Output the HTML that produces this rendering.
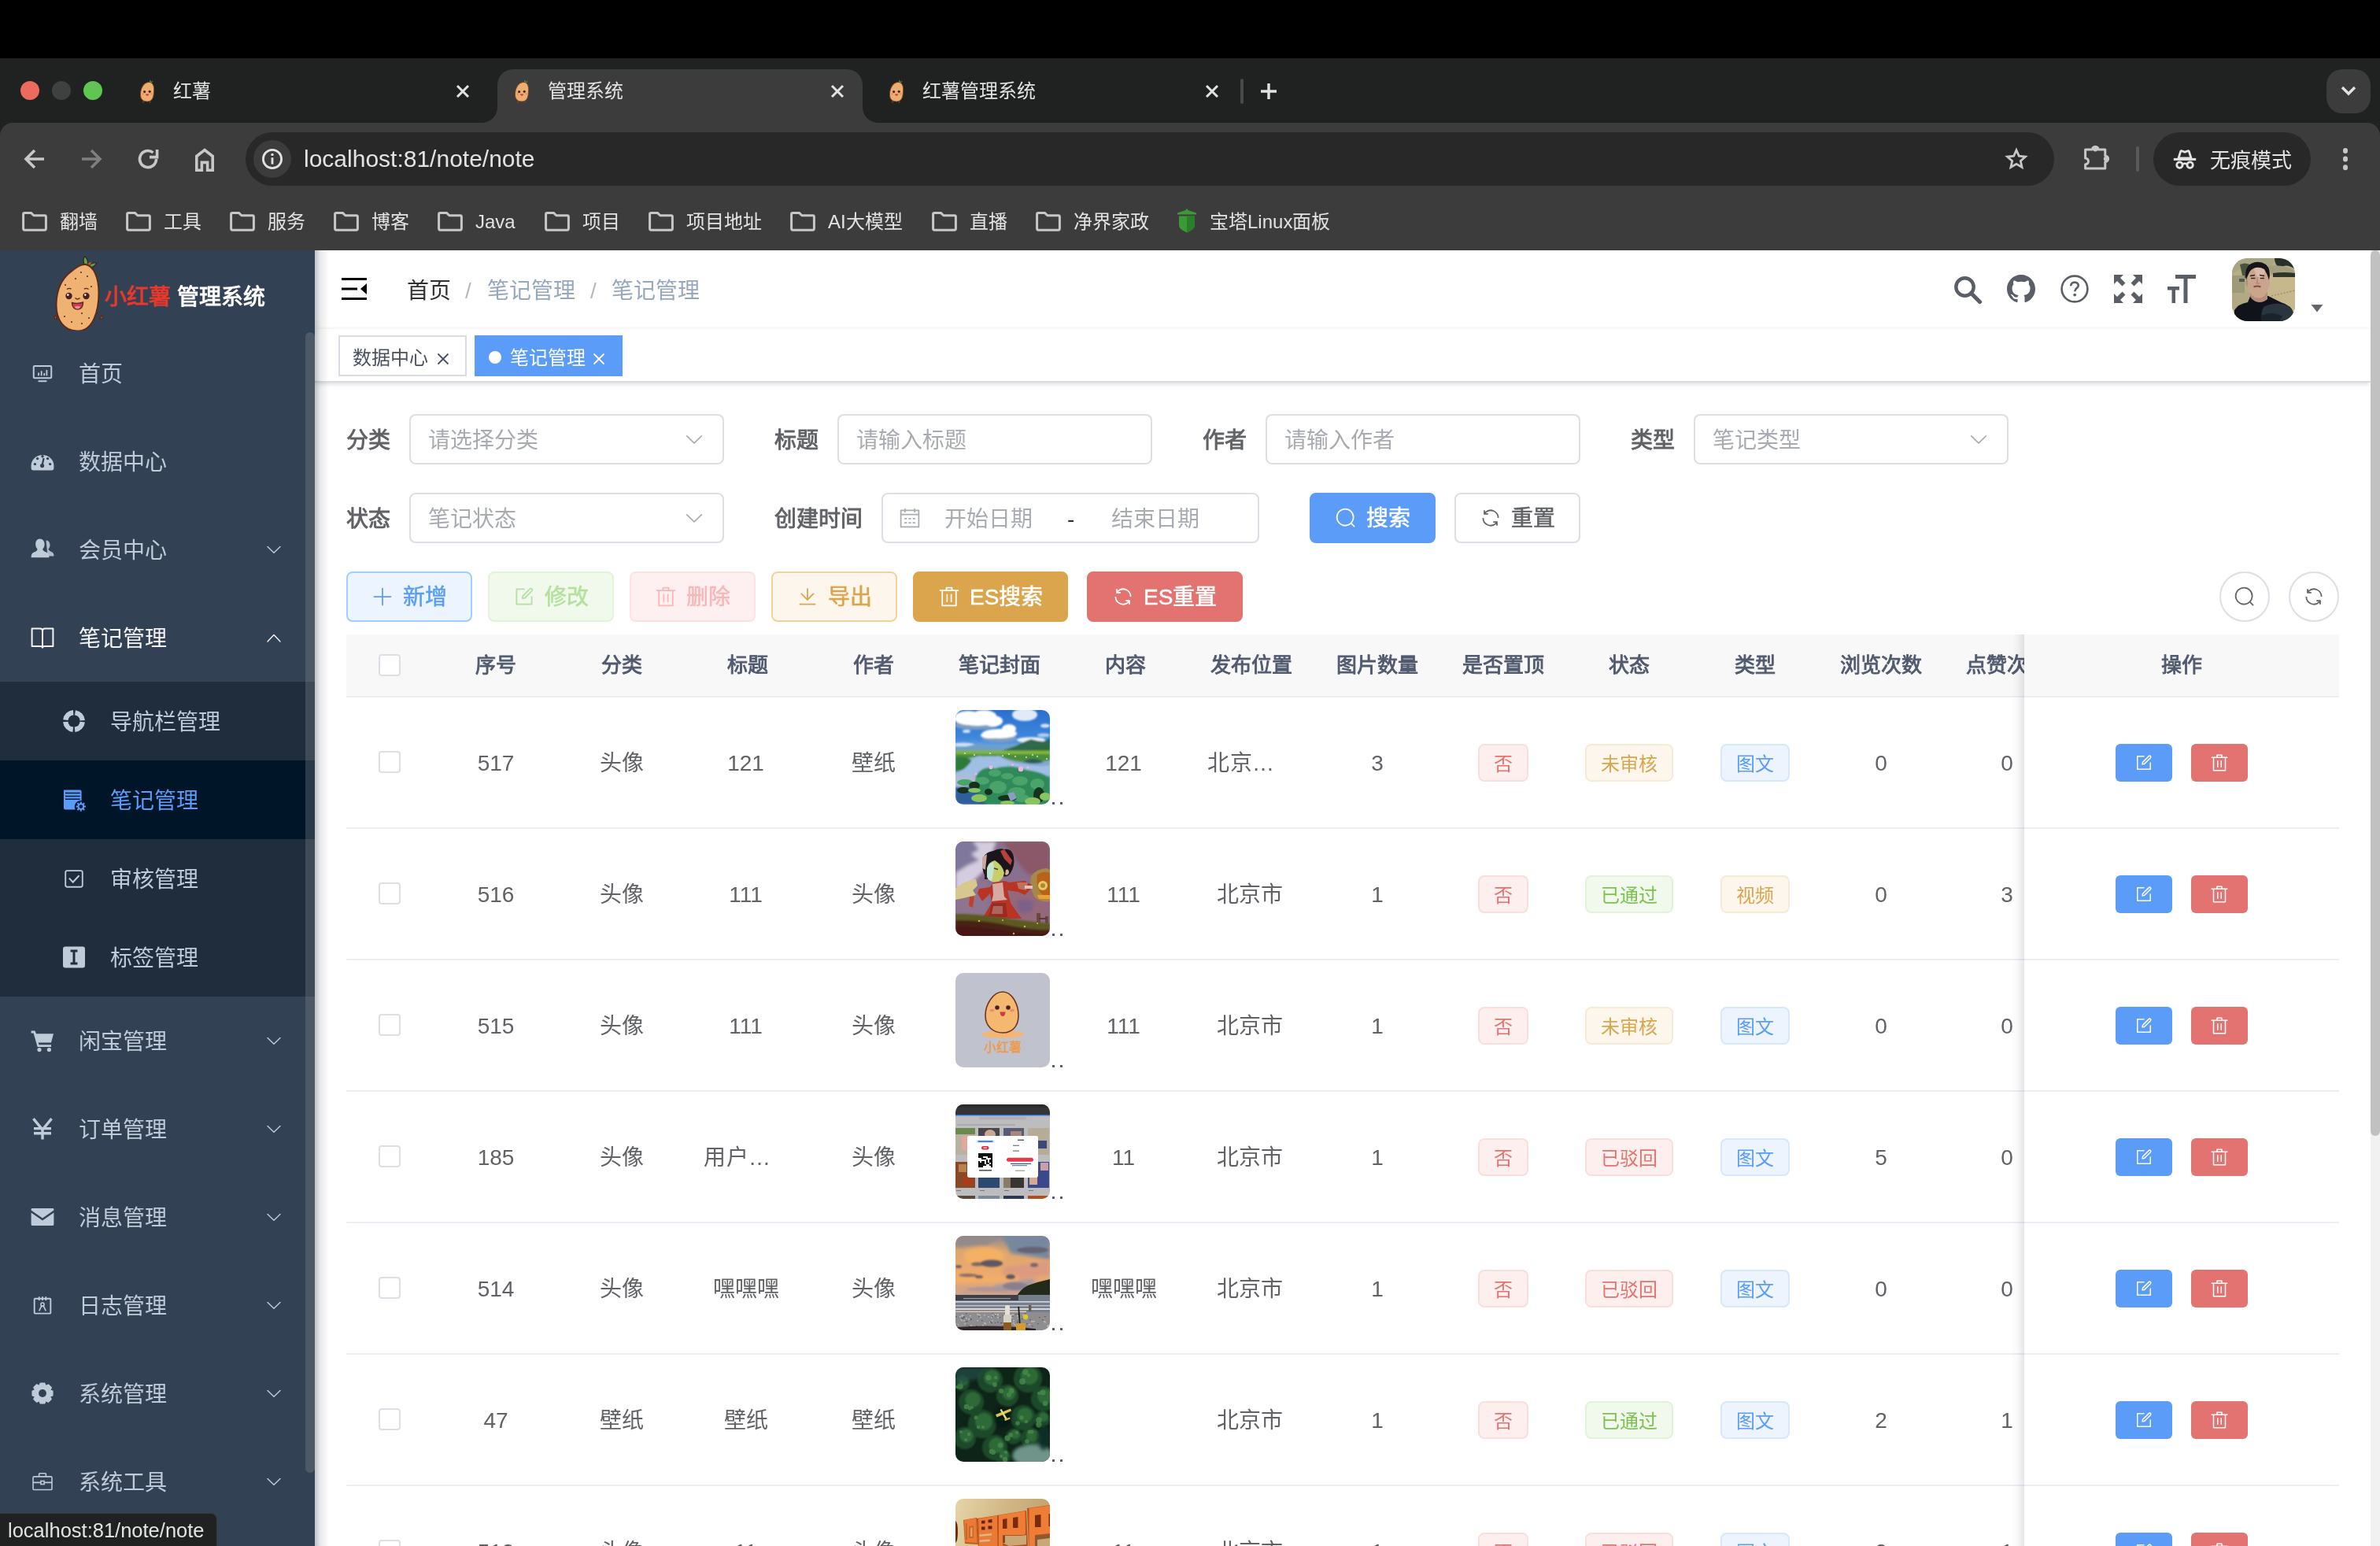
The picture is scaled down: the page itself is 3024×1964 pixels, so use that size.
<!DOCTYPE html>
<html lang="zh-CN">
<head>
<meta charset="utf-8">
<title>管理系统</title>
<style>
*{box-sizing:border-box;margin:0;padding:0}
html,body{width:3024px;height:1964px;overflow:hidden;background:#fff}
body{font-family:"Liberation Sans",sans-serif;position:relative;color:#606266;-webkit-font-smoothing:antialiased}
.abs{position:absolute}
#root{position:absolute;left:0;top:0;width:3024px;height:1964px;overflow:hidden;will-change:transform}
svg{display:block}
/* ---------- browser chrome ---------- */
#menubar{position:absolute;left:0;top:0;width:3024px;height:74px;background:#000}
#tabstrip{position:absolute;left:0;top:74px;width:3024px;height:120px;background:#202121}
#toolbar{position:absolute;left:0;top:156px;width:3024px;height:162px;background:#3c3c3c;border-radius:16px 16px 0 0}
.tl{position:absolute;top:103px;width:24px;height:24px;border-radius:50%}
.tabtitle{position:absolute;top:100px;font-size:24px;line-height:32px;color:#e3e3e3;white-space:nowrap}
#acttab{position:absolute;left:632px;top:88px;width:464px;height:68px;background:#3c3c3c;border-radius:20px 20px 0 0}
#acttab:before,#acttab:after{content:"";position:absolute;bottom:0;width:20px;height:20px}
#acttab:before{left:-20px;background:radial-gradient(circle at 0 0,transparent 19.5px,#3c3c3c 20.5px)}
#acttab:after{right:-20px;background:radial-gradient(circle at 100% 0,transparent 19.5px,#3c3c3c 20.5px)}
#omni{position:absolute;left:312px;top:168px;width:2298px;height:68px;border-radius:34px;background:#282828}
#url{position:absolute;left:386px;top:184px;font-size:30px;line-height:36px;color:#e3e3e3;white-space:nowrap}
#incog{position:absolute;left:2736px;top:168px;width:200px;height:68px;border-radius:34px;background:#282828}
.bm{position:absolute;top:265px;font-size:24px;line-height:34px;color:#e3e3e3;white-space:nowrap}
.bmi{position:absolute;top:267px}
/* ---------- app ---------- */
#sidebar{position:absolute;left:0;top:318px;width:400px;height:1646px;background:#334154;overflow:hidden}
.mi{position:absolute;left:0;width:400px;height:112px;color:#bfcbd9;font-size:28px;line-height:112px}
.mi .t{position:absolute;left:100px;top:2px;white-space:nowrap}
.mi .ic{position:absolute;left:38px;top:40px;width:32px;height:32px}
.mi .ar{position:absolute;left:336px;top:44px;width:24px;height:24px}
#sub{position:absolute;left:0;top:548px;width:400px;height:400px;background:#1f2d3d}
.si{position:absolute;left:0;width:400px;height:100px;color:#bfcbd9;font-size:28px;line-height:100px}
.si .t{position:absolute;left:140px;top:2px;white-space:nowrap}
.si .ic{position:absolute;left:78px;top:34px;width:32px;height:32px}
#main{position:absolute;left:400px;top:318px;width:2612px;height:1646px;background:#fff;overflow:hidden}
#navbar{position:absolute;left:0;top:0;width:2612px;height:100px;background:#fff;box-shadow:0 2px 8px rgba(0,21,41,.08)}
.bc{position:absolute;top:34px;font-size:28px;line-height:36px;white-space:nowrap}
#tags{position:absolute;left:0;top:100px;width:2612px;height:68px;background:#fff;border-bottom:2px solid #d8dce5;box-shadow:0 2px 6px 0 rgba(0,0,0,.12),0 0 6px 0 rgba(0,0,0,.04)}
.tag{position:absolute;top:8px;height:52px;font-size:24px;line-height:48px;white-space:nowrap}
/* form */
.lbl{position:absolute;font-size:28px;line-height:67px;font-weight:normal;-webkit-text-stroke:0.9px currentColor;color:#606266;white-space:nowrap}
.inp{position:absolute;height:64px;border:2px solid #dcdfe6;border-radius:8px;background:#fff;font-size:28px;line-height:60px;color:#a8abb2;white-space:nowrap}
.inp .ph{position:absolute;left:22px;top:1.500px}
.inp .dd{position:absolute;right:22px;top:16px;width:28px;height:28px}
.btn{position:absolute;height:64px;border-radius:8px;border:2px solid;font-size:28px;line-height:60px;white-space:nowrap;font-weight:normal;-webkit-text-stroke:0.5px currentColor}
.btn svg{position:absolute;top:16px;width:28px;height:28px}
.btn .t{position:absolute;top:1px}
/* table */
#thead{position:absolute;left:40px;top:488px;width:2532px;height:80px;background:#f8f8f9;border-bottom:2px solid #ebeef5}
.th{position:absolute;top:0;width:160px;text-align:center;font-size:26px;line-height:78px;font-weight:normal;-webkit-text-stroke:0.9px currentColor;color:#515a6e;white-space:nowrap}
.row{position:absolute;left:40px;width:2532px;height:167px;border-bottom:2px solid #ebeef5}
.td{position:absolute;top:1px;width:160px;height:165px;text-align:center;font-size:28px;line-height:165px;color:#606266;white-space:nowrap;overflow:hidden}
.cb{position:absolute;left:41px;width:28px;height:28px;border:2px solid #dcdfe6;border-radius:4px;background:#fff}
.tg{position:absolute;height:48px;border:2px solid;border-radius:8px;font-size:24px;line-height:47px;text-align:center;top:59px;white-space:nowrap}
.tg.d{background:#fcefee;border-color:#f8dfde;color:#e27370}
.tg.w{background:#fcf6ed;border-color:#f7ead6;color:#dba54d}
.tg.s{background:#f0f9eb;border-color:#e1f3d8;color:#7ec050}
.tg.p{background:#edf4fe;border-color:#d7e7fc;color:#5a9cf8}
.ob{position:absolute;top:59px;width:72px;height:48px;border-radius:6px}
.ob svg{position:absolute;left:24px;top:12px;width:24px;height:24px}
.img{position:absolute;left:774px;top:16px;width:120px;height:120px;border-radius:10px;overflow:hidden}
.dot{position:absolute;top:133px;width:3.200px;height:3.200px;background:#5c5e65}
#fixed{position:absolute;left:2172px;top:488px;width:400px;height:1158px;background:#fff}
#fixsh{position:absolute;left:2156px;top:488px;width:16px;height:1158px;background:linear-gradient(270deg,rgba(0,0,0,.10),rgba(0,0,0,.03) 50%,rgba(0,0,0,0))}
#fixedh{position:absolute;left:0;top:0;width:400px;height:80px;background:#f8f8f9;border-bottom:2px solid #ebeef5;text-align:center;font-size:26px;line-height:78px;font-weight:normal;-webkit-text-stroke:0.9px currentColor;color:#515a6e}
.frow{position:absolute;left:0;width:400px;height:167px;border-bottom:2px solid #ebeef5}
#vscroll{position:absolute;left:3012px;top:318px;width:12px;height:1646px;background:#f1f1f1}
#vthumb{position:absolute;left:0px;top:0px;width:12px;height:1125px;border-radius:6px;background:#c1c1c1}
#status{position:absolute;left:0;top:1922px;width:276px;height:42px;background:#202121;border-radius:0 8px 0 0;color:#e3e3e3;font-size:25.500px;line-height:42px;padding-left:10px;white-space:nowrap;border-top:1px solid #3a3a3a;border-right:1px solid #3a3a3a}
</style>
</head>
<body>
<div id="root">
<svg width="0" height="0" style="position:absolute">
<defs>
<filter id="bl1" x="-10%" y="-10%" width="120%" height="120%"><feGaussianBlur stdDeviation="1.100"/></filter>
<filter id="bl05" x="-10%" y="-10%" width="120%" height="120%"><feGaussianBlur stdDeviation="0.700"/></filter>
<filter id="bl2" x="-10%" y="-10%" width="120%" height="120%"><feGaussianBlur stdDeviation="2"/></filter>
<linearGradient id="g1sky" x1="0" y1="0" x2="0" y2="1"><stop offset="0" stop-color="#2a6fce"/><stop offset=".3" stop-color="#3f88dc"/><stop offset=".5" stop-color="#9ac6ec"/><stop offset="1" stop-color="#9ac6ec"/></linearGradient>
<linearGradient id="g1w" x1="0" y1="0" x2="0" y2="1"><stop offset="0" stop-color="#9bbbe0"/><stop offset="1" stop-color="#2c4f86"/></linearGradient>
<symbol id="img1" viewBox="0 0 120 120">
<rect width="120" height="120" fill="url(#g1sky)"/>
<g filter="url(#bl1)">
<g fill="#7f9cc4"><ellipse cx="26" cy="19" rx="28" ry="6"/><ellipse cx="56" cy="36" rx="22" ry="5"/></g>
<g fill="#fff"><ellipse cx="16" cy="10" rx="18" ry="9"/><ellipse cx="36" cy="8" rx="16" ry="8"/><ellipse cx="48" cy="14" rx="12" ry="7"/><ellipse cx="28" cy="14" rx="22" ry="6"/>
<ellipse cx="56" cy="30" rx="22" ry="6"/><ellipse cx="68" cy="24" rx="9" ry="6"/><ellipse cx="44" cy="32" rx="12" ry="4"/>
<ellipse cx="88" cy="6" rx="16" ry="8" opacity=".85"/><ellipse cx="96" cy="38" rx="18" ry="3.500" opacity=".9"/><ellipse cx="114" cy="20" rx="6" ry="2.500" opacity=".8"/><ellipse cx="112" cy="32" rx="8" ry="2.500" opacity=".6"/><ellipse cx="10" cy="44" rx="14" ry="2.500" opacity=".7"/><ellipse cx="14" cy="27" rx="5" ry="2" opacity=".8"/></g>
<path d="M0 47L14 46L28 43L36 44L48 46L64 45L74 43L84 44V52H0Z" fill="#6f9fc4"/>
<path d="M58 52L76 46L88 40L96 37L104 39L112 40L120 36V54H58Z" fill="#2f6b4c"/>
<path d="M84 54L100 48L120 44V54Z" fill="#2a6a3a"/>
<rect y="51.500" width="120" height="5" fill="#7fb53c"/>
<rect y="56" width="120" height="64" fill="url(#g1w)"/>
<path d="M0 56H120V64Q100 68 84 66Q66 64 56 58Q40 60 30 58Q20 62 0 62Z" fill="#4a8f3a"/>
<path d="M0 60Q14 58 20 64Q22 72 10 76L0 78Z" fill="#2f7a3a"/>
<path d="M22 62Q40 56 56 60Q70 68 96 70Q110 72 120 70V84Q90 80 70 78Q40 76 24 84Q10 88 0 86V80Q14 76 22 62Z" fill="#9fc0e4"/>
<path d="M86 66Q98 58 112 66Q100 70 86 66Z" fill="#2f5a5a"/>
<path d="M30 76Q50 72 70 74Q80 72 88 76Q70 78 50 80Z" fill="#dfe8f4" opacity=".9"/>
<path d="M0 84Q16 80 30 84L28 96L0 98Z" fill="#aebcd4"/>
<path d="M0 98H30V120H0Z" fill="#2f5f9c"/>
<path d="M26 84Q34 70 50 74Q70 68 90 76Q108 78 120 86V120H40Q24 110 26 84Z" fill="#2f8a58"/>
</g>
<g filter="url(#bl05)">
<g fill="#48a36a"><ellipse cx="54" cy="98" rx="11" ry="8"/><ellipse cx="82" cy="90" rx="10" ry="6"/><ellipse cx="78" cy="104" rx="11" ry="6"/><ellipse cx="34" cy="90" rx="9" ry="5"/><ellipse cx="50" cy="80" rx="8" ry="4.500"/><ellipse cx="104" cy="94" rx="9" ry="7"/><ellipse cx="66" cy="84" rx="8" ry="4"/><ellipse cx="12" cy="92" rx="10" ry="4"/><ellipse cx="84" cy="112" rx="10" ry="5"/></g>
<g fill="#17301a"><ellipse cx="24" cy="96" rx="7" ry="5"/><ellipse cx="10" cy="102" rx="8" ry="4"/><ellipse cx="66" cy="112" rx="12" ry="4"/><ellipse cx="106" cy="108" rx="7" ry="10"/><ellipse cx="42" cy="104" rx="5" ry="4"/></g>
<g fill="#8cc462"><ellipse cx="30" cy="112" rx="10" ry="5"/><ellipse cx="98" cy="116" rx="10" ry="5"/><ellipse cx="24" cy="102" rx="8" ry="3"/><ellipse cx="114" cy="110" rx="7" ry="5"/><ellipse cx="66" cy="118" rx="9" ry="3"/></g>
<path d="M66 106L74 104L78 112L70 116Z" fill="#8a9cc4"/>
<g fill="#f3b4e0"><circle cx="45" cy="73" r="2.400"/><circle cx="83" cy="75" r="3.200"/><circle cx="72.500" cy="69.500" r="1.600"/><circle cx="92" cy="73" r="1.400"/><circle cx="26" cy="81" r="1.400"/></g>
<g fill="#f4f0f4" opacity=".8"><circle cx="12" cy="55" r="1"/><circle cx="24" cy="57" r="1"/><circle cx="44" cy="55" r="1"/><circle cx="60" cy="58" r="1"/><circle cx="76" cy="59" r="1"/><circle cx="90" cy="60" r="1"/><circle cx="104" cy="59" r="1"/><circle cx="116" cy="62" r="1"/><circle cx="68" cy="56" r="1"/><circle cx="98" cy="57" r="1"/></g>
</g>
</symbol>
<radialGradient id="g2sky" cx=".3" cy=".15" r=".9"><stop offset="0" stop-color="#d9c9cf"/><stop offset=".35" stop-color="#9a7f93"/><stop offset="1" stop-color="#6e4a5c"/></radialGradient>
<symbol id="img2" viewBox="0 0 120 120">
<rect width="120" height="120" fill="#8a6f8e"/>
<g filter="url(#bl2)">
<path d="M60 0H120V50L90 40Z" fill="#8a5868"/>
<path d="M70 60H120V100H60Z" fill="#94687a"/>
<path d="M0 50H40V95H0Z" fill="#8d7490"/>
<path d="M22 0H52L40 34L10 62L0 64V40Z" fill="#d4cde0"/>
<path d="M0 0H22L30 10L20 16L30 24L16 30L0 40Z" fill="#7f789c"/>
<path d="M78 76Q90 70 100 78L96 90H80Z" fill="#7d6088"/>
</g>
<g filter="url(#bl05)">
<path d="M0 60Q10 50 26 48L28 56L22 62L26 68L10 72L0 74Z" fill="#d8c88e"/>
<path d="M18 70L24 70L22 84L17 82Z" fill="#c2402a"/>
<path d="M96 44Q104 34 116 34L120 36V76Q108 78 100 70Q94 58 96 44Z" fill="#a8884a"/>
<path d="M104 42Q112 36 120 40V70Q110 70 106 62Q102 52 104 42Z" fill="#b8641e"/>
<circle cx="111" cy="56" r="6" fill="#e8c860"/><circle cx="111" cy="56" r="3" fill="#a88a3a"/>
<path d="M104 68H120V73H106Z" fill="#f0a030"/>
<path d="M34 28Q34 14 48 12Q56 8 62 10Q72 8 74 20Q76 30 70 40Q66 46 60 44L40 48Q34 40 34 28Z" fill="#1a181c"/>
<path d="M57 12L62 10L72 24L70 30L62 22Z" fill="#b8423a"/>
<path d="M34 20L40 16L38 36L34 34Z" fill="#c8a8a0"/>
<path d="M37 36H40V48H37Z" fill="#2a1a1c"/>
<path d="M40 34Q42 26 50 24Q60 30 62 40Q60 50 52 52Q42 52 40 44Z" fill="#c6cf6a"/>
<path d="M40 34Q42 28 48 26Q50 36 46 50Q40 48 40 44Z" fill="#c4e4d4"/>
<path d="M49 34L54 35.500" stroke="#5a3030" stroke-width="1.400"/>
<path d="M64 36Q68 34 68 40Q66 44 63 42Z" fill="#e0b090"/>
<path d="M48 52L62 50L68 52L88 50L98 56L94 62L88 68L80 64L66 62L70 78L84 98H34L46 78L44 66L34 76L28 66L30 60L44 58Z" fill="#b83428"/>
<path d="M47 54L60 52L62 70L66 74L46 76L48 68Z" fill="#d8c0b8" opacity=".85"/>
<path d="M46 78H64L66 96H42Z" fill="#9c2a20"/>
<path d="M48 82H60V92H46Z" fill="#b89890" opacity=".55"/>
<path d="M78 52L92 52L90 62L80 60Z" fill="#c89880" opacity=".6"/>
<path d="M88 56H98V60H88Z" fill="#d8c8c0"/>
<rect x="103" y="91" width="5" height="12" fill="#6a4a3e"/><rect x="114" y="95" width="4" height="9" fill="#6a4a3e"/><rect x="106" y="97" width="10" height="2" fill="#5a3a34"/>
</g>
<g filter="url(#bl1)">
<path d="M0 92Q30 92 60 97Q90 101 120 104V122H0Z" fill="#5c5a20"/>
<path d="M0 100Q40 100 70 107Q100 113 120 112V122H0Z" fill="#4a2416"/>
<path d="M0 108Q40 108 80 116L120 118V122H0Z" fill="#4a1612"/>
</g>
<g fill="#d8b83a"><circle cx="30" cy="101" r="1.200"/><circle cx="60" cy="100" r="1"/><circle cx="88" cy="108" r="1.200"/><circle cx="104" cy="104" r="1"/><circle cx="74" cy="117" r="1.200"/></g>
</symbol>
<symbol id="img3" viewBox="0 0 120 120">
<rect width="120" height="120" fill="#c0c3cd"/>
<ellipse cx="60" cy="78" rx="27" ry="5" fill="#f2b777"/>
<path d="M60 24C72 24 80 40 80 54C80 68 72 76 60 76C48 76 38 68 38 54C38 40 48 24 60 24Z" fill="#f5b870" stroke="#6a3420" stroke-width="1.600"/>
<circle cx="53" cy="44" r="2.800" fill="#4a2418"/><circle cx="67" cy="44" r="2.800" fill="#4a2418"/>
<ellipse cx="46.500" cy="47.500" rx="3" ry="1.800" fill="#f08a78"/><ellipse cx="72" cy="47.500" rx="3" ry="1.800" fill="#f08a78"/>
<path d="M56.500 49.500H63.500Q63 55 60 55Q57 55 56.500 49.500Z" fill="#d2383e"/>
<g fill="#e8913c"><rect x="37" y="88" width="46" height="13" rx="2" opacity="0"/></g>
<text x="60" y="100" text-anchor="middle" font-family="Liberation Sans, sans-serif" font-weight="bold" font-size="15.500" fill="#ee9a4a">小红薯</text>
</symbol>
<symbol id="img4" viewBox="0 0 120 120">
<rect width="120" height="120" fill="#bdbdc0"/>
<rect width="120" height="13" fill="#333436"/><rect width="120" height="4" fill="#2a2b2d"/><rect y="13" width="120" height="1.400" fill="#3468d8"/>
<rect x="30" y="15.500" width="60" height="4" rx="2" fill="#b0b0b3"/>
<rect x="2" y="25.500" width="74" height="1" fill="#9a9a9e"/>
<g filter="url(#bl05)">
<rect x="0" y="30" width="25" height="34" fill="#b9b2a0"/><rect x="0" y="30" width="25" height="8" fill="#6a8a4a"/><rect x="8" y="40" width="12" height="18" fill="#e0a8a0"/>
<rect x="29" y="30" width="27" height="34" fill="#4a444a"/><ellipse cx="44" cy="38" rx="7" ry="6" fill="#c9a898"/>
<rect x="61" y="30" width="26" height="34" fill="#5a5a78"/><rect x="70" y="34" width="14" height="8" fill="#a88878"/>
<rect x="92" y="30" width="27" height="34" fill="#b6ac98"/><rect x="104" y="46" width="12" height="10" fill="#3a4a7a"/>
<rect x="0" y="73" width="25" height="33" fill="#8a4a26"/><rect x="4" y="76" width="10" height="10" fill="#b8834a"/><rect x="10" y="90" width="12" height="12" fill="#a83c1e"/>
<rect x="29" y="73" width="27" height="33" fill="#2f4a70"/><rect x="29" y="73" width="27" height="10" fill="#5a6a88"/>
<rect x="61" y="73" width="26" height="33" fill="#3a3430"/><rect x="61" y="80" width="9" height="26" fill="#8a7a68"/>
<rect x="92" y="73" width="27" height="33" fill="#3a4a8c"/><rect x="94" y="92" width="10" height="10" fill="#d8a890"/><rect x="108" y="74" width="10" height="10" fill="#c8a0a8"/>
<rect x="0" y="116" width="25" height="4" fill="#5a4a3a"/><rect x="29" y="116" width="27" height="4" fill="#7a8a9a"/><rect x="61" y="116" width="26" height="4" fill="#2a3a5a"/><rect x="92" y="116" width="27" height="4" fill="#b0501e"/>
</g>
<rect x="1" y="109" width="6" height="1" fill="#777"/><rect x="31" y="109" width="6" height="1" fill="#777"/><rect x="62" y="109" width="6" height="1" fill="#777"/><rect x="93" y="109" width="6" height="1" fill="#777"/>
<rect x="15" y="40" width="90" height="53" rx="2.400" fill="#fff"/>
<rect x="26" y="45" width="24" height="4.200" rx="2.100" fill="#dfe9fd"/><rect x="28.500" y="46.200" width="19" height="1.800" fill="#3a74ec"/>
<rect x="33" y="53" width="9.500" height="4.400" rx="2.200" fill="#e8283e"/><rect x="35.500" y="54.600" width="4.500" height="1.200" fill="#fff"/>
<g fill="#111"><rect x="29" y="62" width="2.050" height="2.050"/><rect x="31" y="62" width="2.050" height="2.050"/><rect x="33" y="62" width="2.050" height="2.050"/><rect x="35" y="62" width="2.050" height="2.050"/><rect x="37" y="62" width="2.050" height="2.050"/><rect x="39" y="62" width="2.050" height="2.050"/><rect x="41" y="62" width="2.050" height="2.050"/><rect x="43" y="62" width="2.050" height="2.050"/><rect x="45" y="62" width="2.050" height="2.050"/><rect x="29" y="64" width="2.050" height="2.050"/><rect x="31" y="64" width="2.050" height="2.050"/><rect x="33" y="64" width="2.050" height="2.050"/><rect x="35" y="64" width="2.050" height="2.050"/><rect x="37" y="64" width="2.050" height="2.050"/><rect x="39" y="64" width="2.050" height="2.050"/><rect x="41" y="64" width="2.050" height="2.050"/><rect x="43" y="64" width="2.050" height="2.050"/><rect x="45" y="64" width="2.050" height="2.050"/><rect x="29" y="66" width="2.050" height="2.050"/><rect x="31" y="66" width="2.050" height="2.050"/><rect x="33" y="66" width="2.050" height="2.050"/><rect x="41" y="66" width="2.050" height="2.050"/><rect x="43" y="66" width="2.050" height="2.050"/><rect x="45" y="66" width="2.050" height="2.050"/><rect x="33" y="68" width="2.050" height="2.050"/><rect x="35" y="68" width="2.050" height="2.050"/><rect x="37" y="68" width="2.050" height="2.050"/><rect x="45" y="68" width="2.050" height="2.050"/><rect x="39" y="70" width="2.050" height="2.050"/><rect x="43" y="70" width="2.050" height="2.050"/><rect x="45" y="70" width="2.050" height="2.050"/><rect x="29" y="72" width="2.050" height="2.050"/><rect x="33" y="72" width="2.050" height="2.050"/><rect x="35" y="72" width="2.050" height="2.050"/><rect x="39" y="72" width="2.050" height="2.050"/><rect x="43" y="72" width="2.050" height="2.050"/><rect x="45" y="72" width="2.050" height="2.050"/><rect x="29" y="74" width="2.050" height="2.050"/><rect x="31" y="74" width="2.050" height="2.050"/><rect x="33" y="74" width="2.050" height="2.050"/><rect x="35" y="74" width="2.050" height="2.050"/><rect x="39" y="74" width="2.050" height="2.050"/><rect x="41" y="74" width="2.050" height="2.050"/><rect x="45" y="74" width="2.050" height="2.050"/><rect x="29" y="76" width="2.050" height="2.050"/><rect x="31" y="76" width="2.050" height="2.050"/><rect x="33" y="76" width="2.050" height="2.050"/><rect x="35" y="76" width="2.050" height="2.050"/><rect x="37" y="76" width="2.050" height="2.050"/><rect x="43" y="76" width="2.050" height="2.050"/><rect x="45" y="76" width="2.050" height="2.050"/><rect x="29" y="78" width="2.050" height="2.050"/><rect x="31" y="78" width="2.050" height="2.050"/><rect x="33" y="78" width="2.050" height="2.050"/><rect x="45" y="78" width="2.050" height="2.050"/></g>
<rect x="30" y="83" width="16" height="1.600" fill="#555"/>
<rect x="79" y="44.600" width="8" height="1.400" fill="#555"/><rect x="73" y="51.600" width="8" height="1.400" fill="#888"/><rect x="73" y="58.400" width="8" height="1.400" fill="#888"/>
<rect x="65" y="67.800" width="34" height="5" rx="2.500" fill="#e8384c"/>
<rect x="70" y="74.800" width="26" height="1.200" fill="#35508a"/><rect x="72" y="77" width="19" height="1.200" fill="#5a7ab8"/>
<rect x="76" y="83.600" width="12" height="1.200" fill="#999"/>
</symbol>
<linearGradient id="g5sky" x1="0" y1="0" x2="0" y2="1"><stop offset="0" stop-color="#8c8890"/><stop offset=".25" stop-color="#dca670"/><stop offset=".6" stop-color="#eeaa6c"/><stop offset="1" stop-color="#c8a090"/></linearGradient>
<linearGradient id="g5tr" x1="0" y1="0" x2="1" y2="0"><stop offset="0" stop-color="#c89a6a" stop-opacity="0"/><stop offset="1" stop-color="#5a6a8a" stop-opacity=".9"/></linearGradient>
<symbol id="img5" viewBox="0 0 120 120">
<rect width="120" height="78" fill="url(#g5sky)"/>
<g filter="url(#bl2)">
<path d="M60 0H120V30L70 22Z" fill="#77879e"/>
<path d="M0 0H60L40 12L0 14Z" fill="#938b88"/>
<ellipse cx="36" cy="26" rx="26" ry="12" fill="#f4b064"/>
<path d="M60 40L120 32V50L60 56Z" fill="#dc9a80"/>
<path d="M0 50H80V60H0Z" fill="#f2ae68"/>
<path d="M50 62L100 54V70H50Z" fill="#a89aa0"/>
</g>
<g filter="url(#bl1)" fill="#5e5662">
<ellipse cx="46" cy="35" rx="14" ry="4.500"/><ellipse cx="28" cy="36" rx="8" ry="2.500" opacity=".8"/><ellipse cx="98" cy="18" rx="20" ry="4" opacity=".75"/><ellipse cx="70" cy="52" rx="6" ry="3"/><ellipse cx="16" cy="50" rx="12" ry="2" opacity=".7"/><ellipse cx="100" cy="37" rx="5" ry="2.500" opacity=".8"/><ellipse cx="30" cy="52" rx="5" ry="1.800"/><ellipse cx="4" cy="39" rx="4" ry="1.800"/>
<ellipse cx="76" cy="64" rx="16" ry="5" fill="#8a7f8c"/><ellipse cx="40" cy="68" rx="26" ry="3" fill="#a8949a" opacity=".8"/>
</g>
<path d="M77 78Q82 68 92 63Q106 58 120 55V84H80Z" fill="#242a1a"/>
<rect y="75" width="120" height="22" fill="#747e8c"/>
<rect y="75" width="80" height="7" fill="#3c3e48"/>
<g fill="#d8d8dc"><rect y="83" width="120" height="1.600"/><rect y="88" width="120" height="1.400" opacity=".8"/><rect x="0" y="92" width="120" height="2"/><rect x="10" y="79" width="60" height="1.200" opacity=".6"/></g>
<rect y="95.500" width="90" height="1.800" fill="#e8c4a4"/>
<rect y="97" width="120" height="23" fill="#8e8e90"/>
<g fill="#b8b8ba"><rect x="41" y="102" width="2" height="1.400"/><rect x="50" y="99" width="2" height="1.400"/><rect x="9" y="101" width="2" height="1.400"/><rect x="46" y="99" width="2" height="1.400"/><rect x="116" y="114" width="2" height="1.400"/><rect x="27" y="99" width="2" height="1.400"/><rect x="11" y="111" width="2" height="1.400"/><rect x="53" y="100" width="2" height="1.400"/><rect x="30" y="100" width="2" height="1.400"/><rect x="70" y="111" width="2" height="1.400"/><rect x="7" y="101" width="2" height="1.400"/><rect x="28" y="99" width="2" height="1.400"/><rect x="73" y="110" width="2" height="1.400"/><rect x="6" y="105" width="2" height="1.400"/><rect x="5" y="102" width="2" height="1.400"/><rect x="37" y="111" width="2" height="1.400"/><rect x="18" y="101" width="2" height="1.400"/><rect x="73" y="107" width="2" height="1.400"/><rect x="71" y="103" width="2" height="1.400"/><rect x="13" y="104" width="2" height="1.400"/><rect x="47" y="101" width="2" height="1.400"/><rect x="70" y="100" width="2" height="1.400"/><rect x="72" y="99" width="2" height="1.400"/><rect x="79" y="104" width="2" height="1.400"/><rect x="63" y="111" width="2" height="1.400"/><rect x="99" y="108" width="2" height="1.400"/><rect x="59" y="112" width="2" height="1.400"/><rect x="46" y="107" width="2" height="1.400"/><rect x="31" y="103" width="2" height="1.400"/><rect x="89" y="105" width="2" height="1.400"/><rect x="10" y="107" width="2" height="1.400"/><rect x="67" y="113" width="2" height="1.400"/><rect x="112" y="108" width="2" height="1.400"/><rect x="93" y="112" width="2" height="1.400"/><rect x="36" y="100" width="2" height="1.400"/><rect x="15" y="114" width="2" height="1.400"/><rect x="53" y="103" width="2" height="1.400"/><rect x="96" y="108" width="2" height="1.400"/><rect x="19" y="113" width="2" height="1.400"/><rect x="53" y="99" width="2" height="1.400"/><rect x="85" y="100" width="2" height="1.400"/><rect x="97" y="108" width="2" height="1.400"/><rect x="43" y="109" width="2" height="1.400"/><rect x="76" y="113" width="2" height="1.400"/><rect x="74" y="112" width="2" height="1.400"/><rect x="8" y="100" width="2" height="1.400"/><rect x="34" y="113" width="2" height="1.400"/><rect x="89" y="100" width="2" height="1.400"/><rect x="7" y="107" width="2" height="1.400"/><rect x="82" y="112" width="2" height="1.400"/><rect x="36" y="110" width="2" height="1.400"/><rect x="113" y="109" width="2" height="1.400"/><rect x="2" y="112" width="2" height="1.400"/><rect x="45" y="103" width="2" height="1.400"/><rect x="78" y="101" width="2" height="1.400"/><rect x="63" y="99" width="2" height="1.400"/><rect x="27" y="107" width="2" height="1.400"/><rect x="16" y="105" width="2" height="1.400"/><rect x="50" y="110" width="2" height="1.400"/><rect x="117" y="113" width="2" height="1.400"/></g>
<g fill="#5c5c60"><rect x="10" y="103" width="1.600" height="1.200"/><rect x="57" y="110" width="1.600" height="1.200"/><rect x="70" y="106" width="1.600" height="1.200"/><rect x="113" y="102" width="1.600" height="1.200"/><rect x="104" y="111" width="1.600" height="1.200"/><rect x="110" y="106" width="1.600" height="1.200"/><rect x="90" y="111" width="1.600" height="1.200"/><rect x="45" y="110" width="1.600" height="1.200"/><rect x="29" y="102" width="1.600" height="1.200"/><rect x="10" y="103" width="1.600" height="1.200"/><rect x="19" y="105" width="1.600" height="1.200"/><rect x="84" y="105" width="1.600" height="1.200"/><rect x="1" y="113" width="1.600" height="1.200"/><rect x="106" y="103" width="1.600" height="1.200"/><rect x="33" y="107" width="1.600" height="1.200"/><rect x="0" y="102" width="1.600" height="1.200"/><rect x="53" y="109" width="1.600" height="1.200"/><rect x="78" y="108" width="1.600" height="1.200"/><rect x="16" y="114" width="1.600" height="1.200"/><rect x="79" y="99" width="1.600" height="1.200"/><rect x="58" y="110" width="1.600" height="1.200"/><rect x="50" y="110" width="1.600" height="1.200"/><rect x="50" y="101" width="1.600" height="1.200"/><rect x="61" y="110" width="1.600" height="1.200"/><rect x="7" y="104" width="1.600" height="1.200"/><rect x="8" y="104" width="1.600" height="1.200"/><rect x="56" y="103" width="1.600" height="1.200"/><rect x="14" y="108" width="1.600" height="1.200"/><rect x="76" y="99" width="1.600" height="1.200"/><rect x="13" y="98" width="1.600" height="1.200"/><rect x="72" y="102" width="1.600" height="1.200"/><rect x="68" y="101" width="1.600" height="1.200"/><rect x="46" y="98" width="1.600" height="1.200"/><rect x="9" y="104" width="1.600" height="1.200"/><rect x="78" y="110" width="1.600" height="1.200"/><rect x="19" y="106" width="1.600" height="1.200"/><rect x="44" y="109" width="1.600" height="1.200"/><rect x="60" y="101" width="1.600" height="1.200"/><rect x="14" y="113" width="1.600" height="1.200"/><rect x="59" y="113" width="1.600" height="1.200"/><rect x="61" y="107" width="1.600" height="1.200"/><rect x="10" y="102" width="1.600" height="1.200"/><rect x="13" y="108" width="1.600" height="1.200"/><rect x="94" y="106" width="1.600" height="1.200"/><rect x="61" y="103" width="1.600" height="1.200"/><rect x="66" y="98" width="1.600" height="1.200"/><rect x="26" y="114" width="1.600" height="1.200"/><rect x="46" y="102" width="1.600" height="1.200"/><rect x="88" y="98" width="1.600" height="1.200"/><rect x="97" y="114" width="1.600" height="1.200"/></g>
<path d="M0 116Q50 112 102 118V120H0Z" fill="#33262a"/>
<rect x="63" y="88" width="6" height="14" rx="2.500" fill="#e4e0d8"/><rect x="61" y="100" width="10" height="20" rx="2" fill="#d8d2c4"/><rect x="61" y="110" width="10" height="10" fill="#8a5a1e"/>
<rect x="80" y="90" width="1.800" height="22" fill="#1c1c1c" transform="rotate(-4 80 100)"/>
<rect x="77" y="111" width="12" height="9" fill="#d89a2a"/><circle cx="89" cy="103" r="3.200" fill="#d8c838"/>
<rect x="93" y="88" width="3.400" height="8" fill="#6a604a"/>
</symbol>
<symbol id="img6" viewBox="0 0 120 120">
<rect width="120" height="120" fill="#0f2418"/>
<g filter="url(#bl1)"><g fill="#1f4a2a"><circle cx="44" cy="16" r="16"/><circle cx="92" cy="14" r="18"/><circle cx="112" cy="40" r="16"/><circle cx="20" cy="44" r="16"/><circle cx="66" cy="36" r="14"/><circle cx="34" cy="72" r="18"/><circle cx="86" cy="64" r="16"/><circle cx="12" cy="90" r="14"/><circle cx="50" cy="102" r="16"/><circle cx="96" cy="90" r="13"/><circle cx="74" cy="88" r="10"/><circle cx="60" cy="114" r="10"/><circle cx="110" cy="66" r="10"/><circle cx="8" cy="20" r="10"/></g><g fill="#2f6a38"><circle cx="46" cy="13" r="9.6"/><circle cx="94" cy="11" r="10.8"/><circle cx="114" cy="37" r="9.6"/><circle cx="22" cy="41" r="9.6"/><circle cx="68" cy="33" r="8.4"/><circle cx="36" cy="69" r="10.8"/><circle cx="88" cy="61" r="9.6"/><circle cx="14" cy="87" r="8.4"/><circle cx="52" cy="99" r="9.6"/><circle cx="98" cy="87" r="7.8"/><circle cx="76" cy="85" r="6.0"/><circle cx="62" cy="111" r="6.0"/><circle cx="112" cy="63" r="6.0"/><circle cx="10" cy="17" r="6.0"/></g></g>
<g filter="url(#bl05)" fill="#4a8a4a" opacity=".8"><circle cx="50" cy="22" r="2.9"/><circle cx="42" cy="13" r="3.6"/><circle cx="51" cy="13" r="2.2"/><circle cx="93" cy="10" r="2.2"/><circle cx="85" cy="18" r="3.9"/><circle cx="89" cy="6" r="3.7"/><circle cx="106" cy="33" r="2.1"/><circle cx="111" cy="32" r="3.6"/><circle cx="114" cy="46" r="3.2"/><circle cx="18" cy="52" r="2.5"/><circle cx="21" cy="51" r="2.0"/><circle cx="14" cy="50" r="3.3"/><circle cx="71" cy="30" r="3.4"/><circle cx="68" cy="35" r="3.0"/><circle cx="58" cy="30" r="3.1"/><circle cx="29" cy="76" r="2.2"/><circle cx="35" cy="76" r="2.1"/><circle cx="26" cy="64" r="2.4"/><circle cx="79" cy="71" r="2.8"/><circle cx="90" cy="69" r="2.1"/><circle cx="84" cy="64" r="2.7"/><circle cx="13" cy="92" r="2.0"/><circle cx="17" cy="85" r="2.3"/><circle cx="7" cy="82" r="2.1"/><circle cx="57" cy="99" r="3.4"/><circle cx="48" cy="108" r="3.0"/><circle cx="46" cy="107" r="3.3"/><circle cx="91" cy="94" r="2.8"/><circle cx="94" cy="82" r="2.5"/><circle cx="97" cy="82" r="2.4"/><circle cx="78" cy="83" r="2.1"/><circle cx="70" cy="86" r="2.9"/><circle cx="66" cy="90" r="3.7"/><circle cx="64" cy="108" r="2.1"/><circle cx="58" cy="113" r="2.0"/><circle cx="63" cy="117" r="3.2"/><circle cx="106" cy="73" r="3.7"/><circle cx="106" cy="70" r="2.4"/><circle cx="106" cy="67" r="3.8"/><circle cx="7" cy="18" r="2.3"/><circle cx="6" cy="24" r="3.8"/><circle cx="2" cy="25" r="2.1"/></g>
<g filter="url(#bl2)"><ellipse cx="98" cy="112" rx="26" ry="14" fill="#6f948a"/><path d="M0 0H40L30 14L0 22Z" fill="#1f4a44" opacity=".8"/><ellipse cx="60" cy="64" rx="10" ry="14" fill="#081a10" opacity=".8"/><ellipse cx="112" cy="90" rx="8" ry="16" fill="#10302a" opacity=".8"/></g>
<path d="M51 60L70 52.500L71 55.500L52.500 63.500Z" fill="#d8c44e"/><path d="M58.500 53L66.500 66.500L64 67.500L56.500 54Z" fill="#e8d870"/><path d="M62 66L69 63.500L69.500 65.500L63 68Z" fill="#d8c44e"/>
</symbol>
<linearGradient id="g7" x1="0" y1="0" x2="1" y2=".3"><stop offset="0" stop-color="#e6d4a8"/><stop offset=".5" stop-color="#d2b886"/><stop offset="1" stop-color="#c0a070"/></linearGradient>
<symbol id="img7" viewBox="0 0 120 120">
<rect width="120" height="120" fill="url(#g7)"/>
<g filter="url(#bl05)">
<path d="M0 28Q3 30 3 42Q3 54 0 56Z" fill="#6a2f10"/>
<path d="M10 27L27 24L29 58L12 57Z" fill="#c25a1e"/>
<path d="M11 27L26 24.500L27.500 56L12.500 55Z" fill="#ea7a34"/>
<path d="M13 31L15 31L15 52L13 52ZM17 35L23 34L23 50L17 50Z" fill="#c8682a"/>
<path d="M19 37L21.500 36.600L21.500 48L19 48Z" fill="#e8a060"/>
<path d="M27 25L54 21L55 62L29 62Z" fill="#b8501a"/>
<path d="M29 25L53 21.500L53.500 62L30 62Z" fill="#ea7a34"/>
<g fill="#6a2410"><path d="M33 28L37.500 27.400V31.500H33ZM41.500 26.800L46.500 26V30.200H41.500ZM33 35.500H37.500V39.500H33ZM41.500 34.500H46.500V38.500H41.500Z"/></g>
<g fill="#d9b988"><path d="M30.500 45.500L46 44V46.500L30.500 48ZM30.500 52.500L44 51.500V54L30.500 55Z"/></g>
<path d="M53 21L90 15L92 62L55 62Z" fill="#b8501a"/>
<path d="M55 21L88.500 15.500L89 44Q88 46 84 46L60 46L60 62L55 62Z" fill="#ee7d36"/>
<g fill="#7a2c10"><path d="M60 26L65.500 25V38H60ZM73 24L79.500 23V37H73Z"/></g>
<path d="M60 47L84 47L90 46V58L68 60L60 56Z" fill="#c9a878"/>
<path d="M60 47H63V56L60 56Z" fill="#8a4a1e"/>
<path d="M91 12L120 8V62H93Z" fill="#b8501a"/>
<path d="M93.500 12L120 8.500V44L101 46V62H93.500Z" fill="#ee7d36"/>
<path d="M101 21L108.500 20V36H101Z" fill="#7a2c10"/>
<path d="M118.500 19L120 19V35H118.500Z" fill="#7a2c10"/>
<path d="M101 47L120 45V62H101Z" fill="#8a5a30"/>
<path d="M104 52L120 50V62H104Z" fill="#c9a878"/>
</g>
</symbol>
</defs>
</svg>
<!-- ================= BROWSER CHROME ================= -->
<div id="menubar"></div>
<div id="tabstrip"></div>
<div class="tl" style="left:26px;background:#ec6a5e"></div>
<div class="tl" style="left:66px;background:#3f4040"></div>
<div class="tl" style="left:106px;background:#61c554"></div>
<div id="acttab"></div>
<div id="toolbar"></div>
<!-- tab 1 -->
<svg class="abs" style="left:175px;top:100px" width="24" height="32" viewBox="0 0 24 32"><use href="#potato"/></svg>
<div class="tabtitle" style="left:220px">红薯</div>
<svg class="abs" style="left:578px;top:106px" width="20" height="20" viewBox="0 0 20 20"><path d="M3 3L17 17M17 3L3 17" stroke="#e3e3e3" stroke-width="3" fill="none"/></svg>
<!-- tab 2 (active) -->
<svg class="abs" style="left:651px;top:100px" width="24" height="32" viewBox="0 0 24 32"><use href="#potato"/></svg>
<div class="tabtitle" style="left:696px">管理系统</div>
<svg class="abs" style="left:1054px;top:106px" width="20" height="20" viewBox="0 0 20 20"><path d="M3 3L17 17M17 3L3 17" stroke="#e3e3e3" stroke-width="3" fill="none"/></svg>
<!-- tab 3 -->
<svg class="abs" style="left:1127px;top:100px" width="24" height="32" viewBox="0 0 24 32"><use href="#potato"/></svg>
<div class="tabtitle" style="left:1172px">红薯管理系统</div>
<svg class="abs" style="left:1530px;top:106px" width="20" height="20" viewBox="0 0 20 20"><path d="M3 3L17 17M17 3L3 17" stroke="#e3e3e3" stroke-width="3" fill="none"/></svg>
<div class="abs" style="left:1576px;top:100px;width:4px;height:32px;border-radius:2px;background:#4a4a4a"></div>
<svg class="abs" style="left:1600px;top:104px" width="24" height="24" viewBox="0 0 24 24"><path d="M12 2V22M2 12H22" stroke="#e3e3e3" stroke-width="3.4" fill="none"/></svg>
<!-- tab search -->
<div class="abs" style="left:2956px;top:88px;width:56px;height:56px;border-radius:20px;background:#3c3c3c"></div>
<svg class="abs" style="left:2972px;top:106px" width="24" height="20" viewBox="0 0 24 20"><path d="M4 5L12 13L20 5" stroke="#e3e3e3" stroke-width="3.4" fill="none"/></svg>
<!-- toolbar icons -->
<svg class="abs" style="left:28px;top:186px" width="32" height="32" viewBox="0 0 32 32"><path d="M28 16H6M16 5L5 16L16 27" stroke="#c7c7c7" stroke-width="3.6" fill="none"/></svg>
<svg class="abs" style="left:100px;top:186px" width="32" height="32" viewBox="0 0 32 32"><path d="M4 16H26M16 5L27 16L16 27" stroke="#7f7f7f" stroke-width="3.6" fill="none"/></svg>
<svg class="abs" style="left:172px;top:186px" width="32" height="32" viewBox="0 0 32 32"><path d="M26.5 16A10.5 10.5 0 1 1 22.5 7.8" stroke="#c7c7c7" stroke-width="3.6" fill="none"/><path d="M27.6 4V13.6H18" stroke="#c7c7c7" stroke-width="3.6" fill="none"/></svg>
<svg class="abs" style="left:244px;top:184px" width="32" height="36" viewBox="0 0 32 36"><path d="M5.8 32.2V14.5L16 6.5L26.2 14.5V32.2H19.6V22.4H12.4V32.2Z" stroke="#c7c7c7" stroke-width="3.6" fill="none"/></svg>
<div id="omni"></div>
<div class="abs" style="left:322px;top:178px;width:48px;height:48px;border-radius:24px;background:#3c3c3c"></div>
<svg class="abs" style="left:330px;top:186px" width="32" height="32" viewBox="0 0 32 32"><circle cx="16" cy="16" r="11.6" stroke="#e3e3e3" stroke-width="2.8" fill="none"/><rect x="14.6" y="14.2" width="2.8" height="8.4" fill="#e3e3e3"/><circle cx="16" cy="10.4" r="1.7" fill="#e3e3e3"/></svg>
<div id="url">localhost:81/note/note</div>
<!-- star -->
<svg class="abs" style="left:2546px;top:186px" width="32" height="32" viewBox="0 0 24 24"><path d="M12 3.6l2.5 5.6 6.1.6-4.6 4.1 1.3 6L12 16.8l-5.3 3.1 1.3-6L3.4 9.8l6.1-.6z" stroke="#c7c7c7" stroke-width="2.1" fill="none" stroke-linejoin="miter"/></svg>
<!-- extension -->
<svg class="abs" style="left:2644px;top:184px" width="36" height="36" viewBox="0 0 36 36"><path d="M5.600 6.100H14.400A3.900 3.900 0 0 1 22.200 6.100H30.800V13.900A3.800 3.800 0 0 1 30.800 21.500V30H5.600V24.800A3.900 3.900 0 0 0 5.600 17Z" stroke="#c7c7c7" stroke-width="3" fill="none" stroke-linejoin="round"/><circle cx="18.300" cy="5.400" r="3" fill="#c7c7c7"/><circle cx="31.600" cy="17.700" r="2.800" fill="#c7c7c7"/></svg>
<div class="abs" style="left:2714px;top:186px;width:4px;height:32px;border-radius:2px;background:#5a5a5a"></div>
<div id="incog"></div>
<svg class="abs" style="left:2760px;top:186px" width="32" height="32" viewBox="0 0 32 32"><path d="M1.800 16.400H30.200" stroke="#e3e3e3" stroke-width="3" fill="none"/><path d="M8 14.8L10.6 6.6Q11 5.4 12.2 5.8L14.8 6.8Q16 7.2 17.2 6.8L19.8 5.8Q21 5.4 21.4 6.6L24 14.8Z" fill="none" stroke="#e3e3e3" stroke-width="2.8" stroke-linejoin="round"/><circle cx="9.4" cy="23.6" r="3.7" stroke="#e3e3e3" stroke-width="2.8" fill="none"/><circle cx="22.6" cy="23.6" r="3.7" stroke="#e3e3e3" stroke-width="2.8" fill="none"/><path d="M13 22.6Q16 20.8 19 22.6" stroke="#e3e3e3" stroke-width="2.6" fill="none"/></svg>
<div class="abs" style="left:2808px;top:186px;font-size:26px;line-height:36px;color:#e3e3e3;white-space:nowrap">无痕模式</div>
<div class="abs" style="left:2976.700px;top:188px;width:6.600px;height:6.600px;border-radius:4px;background:#c7c7c7;box-shadow:0 10.600px 0 #c7c7c7,0 21.200px 0 #c7c7c7"></div>
<!-- bookmarks -->
<svg width="0" height="0" style="position:absolute">
<defs>
<symbol id="folder" viewBox="0 0 32 28"><path d="M1.600 5Q1.600 3.400 3.200 3.400H11.400L14.800 6.800H28.800Q30.400 6.800 30.400 8.400V23.600Q30.400 25.200 28.800 25.200H3.200Q1.600 25.200 1.600 23.600Z" stroke="#c7c7c7" stroke-width="3" fill="none" stroke-linejoin="round"/></symbol>
<symbol id="potato" viewBox="0 0 24 32">
<path d="M14.6 4.4L16 1.2L17 4.2L19.4 2.6L18 5.6" fill="#4d9a3c"/>
<path d="M15 4.5C19.5 5 21 10 20.6 15.5C20.3 20 20 25.5 16.5 27.8C13.5 29.6 8.8 29.4 6 27C3 24.4 3 19 4.2 14.5C5.6 9 9.5 4 15 4.5Z" fill="#ecae6e" stroke="#7a4520" stroke-width="1"/>
<circle cx="8.6" cy="16.4" r="1.5" fill="#3a1f14"/><circle cx="15.2" cy="16.2" r="1.5" fill="#3a1f14"/>
<path d="M9.6 19.6Q12 23.8 14.6 19.4Z" fill="#c9304a"/>
<circle cx="6.6" cy="19.4" r="1.3" fill="#ef8a78"/><circle cx="17.4" cy="19" r="1.3" fill="#ef8a78"/>
<path d="M7 28.2V30.4M15.6 28.6V30.6" stroke="#7a4520" stroke-width="1.6"/>
</symbol>
</defs>
</svg>
<svg class="bmi" style="left:28px" width="32" height="28"><use href="#folder"/></svg><div class="bm" style="left:76px">翻墙</div>
<svg class="bmi" style="left:160px" width="32" height="28"><use href="#folder"/></svg><div class="bm" style="left:208px">工具</div>
<svg class="bmi" style="left:292px" width="32" height="28"><use href="#folder"/></svg><div class="bm" style="left:340px">服务</div>
<svg class="bmi" style="left:424px" width="32" height="28"><use href="#folder"/></svg><div class="bm" style="left:472px">博客</div>
<svg class="bmi" style="left:556px" width="32" height="28"><use href="#folder"/></svg><div class="bm" style="left:604px">Java</div>
<svg class="bmi" style="left:692px" width="32" height="28"><use href="#folder"/></svg><div class="bm" style="left:740px">项目</div>
<svg class="bmi" style="left:824px" width="32" height="28"><use href="#folder"/></svg><div class="bm" style="left:872px">项目地址</div>
<svg class="bmi" style="left:1004px" width="32" height="28"><use href="#folder"/></svg><div class="bm" style="left:1052px">AI大模型</div>
<svg class="bmi" style="left:1184px" width="32" height="28"><use href="#folder"/></svg><div class="bm" style="left:1232px">直播</div>
<svg class="bmi" style="left:1316px" width="32" height="28"><use href="#folder"/></svg><div class="bm" style="left:1364px">净界家政</div>
<svg class="abs" style="left:1495px;top:264px" width="26" height="32" viewBox="0 0 26 32"><path d="M1 6.4L13 2.6L25 6.4V8.4H1Z" fill="#3a9b36"/><path d="M13 0.4L14.4 3H11.6Z" fill="#3a9b36"/><path d="M3 10.4H23V22Q23 27.4 13 31.4Q3 27.4 3 22Z" fill="#3a9b36"/><path d="M13 10.4V31.4Q23 27.4 23 22V10.4Z" fill="#2c7f2a"/></svg>
<div class="bm" style="left:1537px">宝塔Linux面板</div>
<!-- ================= SIDEBAR ================= -->
<div id="sidebar">
<svg class="abs" style="left:67px;top:6px" width="66" height="96" viewBox="0 0 66 96">
<path d="M41 13C38 8 39 4 40.500 1.500C43.500 4 45 8 44.500 12.500Z" fill="#56a845" stroke="#3c2114" stroke-width="1.200"/>
<path d="M46.500 13.500C49 10.500 52.500 9.600 55.500 10.200C54 13.400 51 15.400 47.500 15.600Z" fill="#56a845" stroke="#3c2114" stroke-width="1.200"/>
<path d="M44 12.500C45 9.500 47 8.500 49 9C49 11.500 47.500 13.500 45.500 14Z" fill="#b5542e"/>
<path d="M3.200 76.500C1.500 77.500 1.500 81.500 5.500 81.500ZM62 76.500C64 77.500 64 81.500 60 81.500Z" fill="#eaa765" stroke="#5a2a1a" stroke-width="1.600"/>
<path d="M42 12C52 14 58.500 28 58.500 48C58.500 70 52 96 32 96.500C14 97 4 82 4.500 62C5 42 12 30 22 22C29 16.500 35 11 42 12Z" fill="#f0b272" stroke="#5a2a1a" stroke-width="2"/>
<circle cx="20.500" cy="52" r="4.200" fill="#4a1f1c"/><circle cx="42.500" cy="52" r="4.200" fill="#4a1f1c"/>
<circle cx="19.300" cy="50.600" r="1.300" fill="#fff"/><circle cx="41.300" cy="50.600" r="1.300" fill="#fff"/>
<path d="M18 43.500Q20.500 41.500 23.500 43M40 43Q43 41.500 45.500 43.500" stroke="#5a2a1a" stroke-width="1.400" fill="none"/>
<path d="M28.500 54.500Q31.500 57.500 34.500 54.500" stroke="#5a2a1a" stroke-width="1.400" fill="none"/>
<path d="M24.500 60.500Q31.500 62.500 38.500 60C38.500 66 35.500 69 31.500 69C27.500 69 24.500 66 24.500 60.500Z" fill="#d23b55" stroke="#5a2a1a" stroke-width="1.400"/>
<path d="M27.500 66Q31.500 63.500 35.500 66Q33.500 68.600 31.500 68.600Q29.500 68.600 27.500 66Z" fill="#f08a8a"/>
<g fill="#5a2a1a"><circle cx="29" cy="30" r="1"/><circle cx="44" cy="27" r="1"/><circle cx="36" cy="22" r="1"/><circle cx="16" cy="38" r="1"/><circle cx="49" cy="40" r="1"/><circle cx="15" cy="78" r="1"/><circle cx="24" cy="85" r="1"/><circle cx="37" cy="87" r="1"/><circle cx="46" cy="80" r="1"/><circle cx="37" cy="74" r="1"/></g>
</svg>
<div class="abs" style="left:133px;top:40px;font-size:28px;line-height:40px;font-weight:bold;color:#e8382c;white-space:nowrap">小红薯</div>
<div class="abs" style="left:225px;top:40px;font-size:28px;line-height:40px;font-weight:bold;color:#fff;white-space:nowrap">管理系统</div>
<div class="mi" style="top:100px;color:#bfcbd9"><svg class="ic" style="transform:scale(0.9)" viewBox="0 0 32 32"><rect x="3.5" y="6" width="25" height="17" rx="1.5" stroke="#bfcbd9" stroke-width="2.2" fill="none"/><path d="M10 27.4H22" stroke="#bfcbd9" stroke-width="2.2"/><path d="M10.5 19.5V15.5M14.5 19.5V13M18.5 19.5V16M22 19.5V11.5" stroke="#bfcbd9" stroke-width="2"/></svg><span class="t">首页</span></div>
<div class="mi" style="top:212px;color:#bfcbd9"><svg class="ic" viewBox="0 0 32 32"><path d="M1.6 21.5A14.4 13.4 0 0 1 30.4 21.5V25Q30.4 27.4 28 27.4H4Q1.6 27.4 1.6 25Z" fill="#bfcbd9"/><circle cx="6.4" cy="19.6" r="1.7" fill="#304156"/><circle cx="9.6" cy="12.6" r="1.7" fill="#304156"/><circle cx="16" cy="9.8" r="1.7" fill="#304156"/><circle cx="22.6" cy="12.6" r="1.7" fill="#304156"/><circle cx="25.6" cy="19.6" r="1.7" fill="#304156"/><path d="M17.6 12L15.6 21" stroke="#304156" stroke-width="2.2"/><circle cx="15.6" cy="21.6" r="2.6" fill="#304156"/></svg><span class="t">数据中心</span></div>
<div class="mi" style="top:324px;color:#bfcbd9"><svg class="ic" viewBox="0 0 32 32"><path d="M20.5 4.5c3.2 0 5 2.6 5 6 0 2-.8 3.8-2 5 .2 1.400 1.500 2.400 4 3.600 2.300 1.100 3 2.600 3 5.400h-8z" fill="#aebccb"/><path d="M12.600 2.600c3.800 0 6 3 6 6.800 0 2.400-1 4.600-2.400 6 .2 1.800 1.600 2.800 4.600 4.200 2.800 1.300 3.600 3.200 3.600 6.600H1.600c0-3.400.8-5.300 3.600-6.600 3-1.400 4.200-2.400 4.400-4.200-1.400-1.400-2.400-3.600-2.400-6 0-3.800 1.800-6.800 5.400-6.800z" fill="#bfcbd9"/></svg><span class="t">会员中心</span><svg class="ar" viewBox="0 0 1024 1024"><path fill="#bfcbd9" d="M831.872 340.864 512 652.672 192.128 340.864a30.592 30.592 0 0 0-42.752 0 29.12 29.12 0 0 0 0 41.6L489.664 714.24a32 32 0 0 0 44.672 0l340.288-331.712a29.12 29.12 0 0 0 0-41.728 30.592 30.592 0 0 0-42.752 0z"/></svg></div>
<div class="mi" style="top:436px;color:#f4f4f5"><svg class="ic" viewBox="0 0 32 32"><path d="M2.600 4.400H13Q16 4.400 16 7.400V28.600Q16 27 13 27H2.600Z" stroke="#f4f4f5" stroke-width="2" fill="none" stroke-linejoin="round"/><path d="M29.400 4.400H19Q16 4.400 16 7.400V28.600Q16 27 19 27H29.400Z" stroke="#f4f4f5" stroke-width="2" fill="none" stroke-linejoin="round"/></svg><span class="t">笔记管理</span><svg class="ar" viewBox="0 0 1024 1024"><path fill="#f4f4f5" d="m488.832 344.32-339.84 356.672a32 32 0 0 0 0 44.16l.384.384a29.44 29.44 0 0 0 42.688 0l320-335.872 319.872 335.872a29.44 29.44 0 0 0 42.688 0l.384-.384a32 32 0 0 0 0-44.16L535.168 344.32a32 32 0 0 0-46.336 0z"/></svg></div>
<div id="sub">
<div class="si" style="top:0px;color:#bfcbd9"><svg class="ic" viewBox="0 0 32 32"><circle cx="16" cy="16" r="10.800" stroke="#bfcbd9" stroke-width="6.400" fill="none" stroke-dasharray="14.560 2.400" stroke-dashoffset="-1.200" transform="rotate(0 16 16)"/></svg><span class="t">导航栏管理</span></div>
<div class="si" style="top:100px;color:#5a9cf8;background:#001528"><svg class="ic" viewBox="0 0 32 32"><path d="M3 3.600H23.600Q25.600 3.600 25.600 5.600V17A8 8 0 0 0 17.600 28.400H5Q3 28.400 3 26.400Z" fill="#5a9cf8"/><path d="M5 7.600H23.600M5 11.400H23.600M5 15.200H23.600" stroke="#001528" stroke-width="1.500"/><path d="M24.800 18.400V30.800M18.600 24.600H31M20.400 20.200L29.200 29M29.200 20.200L20.400 29" stroke="#5a9cf8" stroke-width="2"/><circle cx="24.800" cy="24.600" r="4.400" fill="#5a9cf8"/><circle cx="24.800" cy="24.600" r="2.300" fill="#001528"/></svg><span class="t">笔记管理</span></div>
<div class="si" style="top:200px;color:#bfcbd9"><svg class="ic" style="transform:scale(.93)" viewBox="0 0 32 32"><rect x="4.400" y="5.400" width="23.200" height="22.200" rx="2.400" stroke="#bfcbd9" stroke-width="2" fill="none"/><path d="M9.400 15.600L14.600 21L23 12" stroke="#bfcbd9" stroke-width="2.200" fill="none"/></svg><span class="t">审核管理</span></div>
<div class="si" style="top:300px;color:#bfcbd9"><svg class="ic" viewBox="0 0 32 32"><rect x="2" y="2.400" width="28" height="27.200" rx="3" fill="#bfcbd9"/><path d="M11.600 8H20.400M11.600 24H20.400M16 8V24" stroke="#1f2d3d" stroke-width="3"/></svg><span class="t">标签管理</span></div>
</div>
<div class="mi" style="top:948px;color:#bfcbd9"><svg class="ic" viewBox="0 0 32 32"><path d="M1.600 3.600H6.400L8 7.200H30L27 18.400H10.600L11.600 21.200H27V24H9.600L4.600 6.400H1.600Z" fill="#bfcbd9"/><circle cx="12" cy="27.600" r="2.600" fill="#bfcbd9"/><circle cx="24.400" cy="27.600" r="2.600" fill="#bfcbd9"/></svg><span class="t">闲宝管理</span><svg class="ar" viewBox="0 0 1024 1024"><path fill="#bfcbd9" d="M831.872 340.864 512 652.672 192.128 340.864a30.592 30.592 0 0 0-42.752 0 29.12 29.12 0 0 0 0 41.6L489.664 714.24a32 32 0 0 0 44.672 0l340.288-331.712a29.12 29.12 0 0 0 0-41.728 30.592 30.592 0 0 0-42.752 0z"/></svg></div>
<div class="mi" style="top:1060px;color:#bfcbd9"><svg class="ic" viewBox="0 0 32 32"><path d="M4.400 3.200L16 17L27.600 3.200M16 17V29.600M5 15.600H27M5 21.800H27" stroke="#bfcbd9" stroke-width="3.400" fill="none"/></svg><span class="t">订单管理</span><svg class="ar" viewBox="0 0 1024 1024"><path fill="#bfcbd9" d="M831.872 340.864 512 652.672 192.128 340.864a30.592 30.592 0 0 0-42.752 0 29.12 29.12 0 0 0 0 41.6L489.664 714.24a32 32 0 0 0 44.672 0l340.288-331.712a29.12 29.12 0 0 0 0-41.728 30.592 30.592 0 0 0-42.752 0z"/></svg></div>
<div class="mi" style="top:1172px;color:#bfcbd9"><svg class="ic" viewBox="0 0 32 32"><path d="M1.600 6.400Q1.600 5 3 5H29Q30.400 5 30.400 6.400V7.400L16 17.600L1.600 7.400Z" fill="#bfcbd9"/><path d="M1.600 10.400L16 20.600L30.400 10.400V25.600Q30.400 27 29 27H3Q1.600 27 1.600 25.600Z" fill="#bfcbd9"/></svg><span class="t">消息管理</span><svg class="ar" viewBox="0 0 1024 1024"><path fill="#bfcbd9" d="M831.872 340.864 512 652.672 192.128 340.864a30.592 30.592 0 0 0-42.752 0 29.12 29.12 0 0 0 0 41.6L489.664 714.24a32 32 0 0 0 44.672 0l340.288-331.712a29.12 29.12 0 0 0 0-41.728 30.592 30.592 0 0 0-42.752 0z"/></svg></div>
<div class="mi" style="top:1284px;color:#bfcbd9"><svg class="ic" style="transform:scale(0.86)" viewBox="0 0 32 32"><rect x="4" y="6.400" width="24" height="22" rx="1" stroke="#bfcbd9" stroke-width="2.200" fill="none"/><path d="M11 3.600V9M16 3.600V9M21 3.600V9" stroke="#bfcbd9" stroke-width="2.200"/><circle cx="16" cy="15" r="2.400" stroke="#bfcbd9" stroke-width="1.800" fill="none"/><path d="M11 24.600L14.400 17.600H17.600L21 24.600" stroke="#bfcbd9" stroke-width="1.800" fill="none"/></svg><span class="t">日志管理</span><svg class="ar" viewBox="0 0 1024 1024"><path fill="#bfcbd9" d="M831.872 340.864 512 652.672 192.128 340.864a30.592 30.592 0 0 0-42.752 0 29.12 29.12 0 0 0 0 41.6L489.664 714.24a32 32 0 0 0 44.672 0l340.288-331.712a29.12 29.12 0 0 0 0-41.728 30.592 30.592 0 0 0-42.752 0z"/></svg></div>
<div class="mi" style="top:1396px;color:#bfcbd9"><svg class="ic" style="transform:scale(0.88)" viewBox="0 0 32 32"><path d="M13 1.600H19L20.400 5.600L24.600 3.800L28.600 8L26.400 11.600L30.400 13V19L26.400 20.400L28.400 24.400L24.400 28.400L20.400 26.400L19 30.400H13L11.600 26.400L7.600 28.400L3.600 24.400L5.600 20.400L1.600 19V13L5.600 11.600L3.600 7.600L7.600 3.600L11.600 5.600Z" fill="#bfcbd9" stroke="#bfcbd9" stroke-width="2" stroke-linejoin="round"/><circle cx="16" cy="16" r="5.600" fill="#304156"/></svg><span class="t">系统管理</span><svg class="ar" viewBox="0 0 1024 1024"><path fill="#bfcbd9" d="M831.872 340.864 512 652.672 192.128 340.864a30.592 30.592 0 0 0-42.752 0 29.12 29.12 0 0 0 0 41.6L489.664 714.24a32 32 0 0 0 44.672 0l340.288-331.712a29.12 29.12 0 0 0 0-41.728 30.592 30.592 0 0 0-42.752 0z"/></svg></div>
<div class="mi" style="top:1508px;color:#bfcbd9"><svg class="ic" style="transform:scale(0.88)" viewBox="0 0 32 32"><rect x="2.400" y="9" width="27.200" height="19" rx="1.600" stroke="#bfcbd9" stroke-width="1.800" fill="none"/><path d="M11 9V5.400Q11 4.400 12 4.400H20Q21 4.400 21 5.400V9" stroke="#bfcbd9" stroke-width="1.800" fill="none"/><path d="M2.400 17.600H13.600M18.400 17.600H29.600" stroke="#bfcbd9" stroke-width="1.800"/><rect x="13.600" y="15.400" width="4.800" height="4.600" stroke="#bfcbd9" stroke-width="1.800" fill="none"/></svg><span class="t">系统工具</span><svg class="ar" viewBox="0 0 1024 1024"><path fill="#bfcbd9" d="M831.872 340.864 512 652.672 192.128 340.864a30.592 30.592 0 0 0-42.752 0 29.12 29.12 0 0 0 0 41.6L489.664 714.24a32 32 0 0 0 44.672 0l340.288-331.712a29.12 29.12 0 0 0 0-41.728 30.592 30.592 0 0 0-42.752 0z"/></svg></div>
<div class="abs" style="left:388px;top:104px;width:12px;height:1449px;border-radius:6px;background:rgba(144,147,153,.3)"></div>
</div>
<!-- ================= MAIN ================= -->
<div id="main">
<div id="navbar">
<svg class="abs" style="left:34px;top:35px" width="32" height="28" viewBox="0 0 32 28"><path d="M0 1.500H32M0 14H20M0 26.500H32" stroke="#000" stroke-width="3"/><path d="M32 7V21L24 14Z" fill="#000"/></svg>
<div class="bc" style="left:117px;color:#303133">首页</div>
<div class="bc" style="left:191px;color:#b4b7bd">/</div>
<div class="bc" style="left:219px;color:#97a8be">笔记管理</div>
<div class="bc" style="left:350px;color:#b4b7bd">/</div>
<div class="bc" style="left:377px;color:#97a8be">笔记管理</div>
<!-- right menu -->
<svg class="abs" style="left:2081px;top:31px" width="38" height="38" viewBox="0 0 38 38"><circle cx="15.500" cy="15.500" r="11.200" stroke="#5a5e66" stroke-width="4.400" fill="none"/><path d="M23.500 23.500L34.500 34.500" stroke="#5a5e66" stroke-width="5.200" stroke-linecap="round"/></svg>
<svg class="abs" style="left:2150px;top:31px" width="36" height="36" viewBox="0 0 16 16"><path fill="#5a5e66" d="M8 0C3.580 0 0 3.580 0 8c0 3.540 2.290 6.530 5.470 7.590.4.070.550-.170.550-.380 0-.190-.010-.820-.010-1.490-2.010.370-2.530-.490-2.690-.940-.090-.230-.480-.940-.820-1.130-.280-.150-.680-.520-.010-.530.630-.010 1.080.580 1.230.820.720 1.210 1.870.870 2.330.660.070-.520.280-.870.510-1.070-1.780-.200-3.640-.890-3.640-3.950 0-.870.310-1.590.820-2.150-.080-.200-.360-1.020.080-2.120 0 0 .670-.210 2.200.820.640-.180 1.320-.270 2-.270.680 0 1.360.090 2 .270 1.530-1.040 2.200-.820 2.200-.820.440 1.100.160 1.920.080 2.120.510.560.820 1.270.820 2.150 0 3.070-1.870 3.750-3.650 3.950.290.250.540.730.540 1.480 0 1.070-.010 1.930-.010 2.200 0 .210.150.460.550.380A8.013 8.013 0 0016 8c0-4.420-3.580-8-8-8z"/></svg>
<svg class="abs" style="left:2218px;top:31px" width="36" height="36" viewBox="0 0 36 36"><circle cx="18" cy="18" r="16.400" stroke="#5a5e66" stroke-width="2.600" fill="none"/><path d="M13.200 14.200C13.200 11.200 15.400 9.600 18 9.600C20.800 9.600 22.800 11.400 22.800 13.800C22.800 17 18.400 17.200 18.200 21.200" stroke="#5a5e66" stroke-width="2.600" fill="none"/><circle cx="18.200" cy="25.600" r="1.900" fill="#5a5e66"/></svg>
<svg class="abs" style="left:2286px;top:31px" width="36" height="36" viewBox="0 0 36 36"><g fill="#5a5e66"><path d="M0 0H12L8 4L14.500 10.500L10.500 14.500L4 8L0 12Z"/><path d="M36 0V12L32 8L25.500 14.500L21.500 10.500L28 4L24 0Z"/><path d="M0 36V24L4 28L10.500 21.500L14.500 25.500L8 32L12 36Z"/><path d="M36 36H24L28 32L21.500 25.500L25.500 21.500L32 28L36 24Z"/></g></svg>
<svg class="abs" style="left:2354px;top:31px" width="36" height="36" viewBox="0 0 36 36"><g fill="#5a5e66"><path d="M10 0H36V5H25.500V36H20.500V5H10Z"/><path d="M0 15H15V19.500H10V36H5.500V19.500H0Z"/></g></svg>
<!-- avatar -->
<svg class="abs" style="left:2436px;top:10px;border-radius:20px" width="80" height="80" viewBox="0 0 80 80">
<rect width="80" height="80" fill="#b5ad86"/>
<rect x="40" y="22" width="40" height="44" fill="#c6b78c"/>
<path d="M0 0H56L50 10L30 14L12 12L0 20Z" fill="#a8a684"/>
<path d="M10 8Q18 4 26 10L24 22L14 26Z" fill="#4a5240"/>
<path d="M54 0H80V14Q70 6 60 12Q54 8 54 0Z" fill="#27302a"/>
<path d="M46 10Q60 8 72 12Q78 14 80 18V20H50Z" fill="#a39e7e"/>
<path d="M52 19Q66 17 80 19V24H52Z" fill="#2c3626"/>
<path d="M0 22H16V44H0Z" fill="#9e9a78"/>
<path d="M9 26H16V30H9Z" fill="#4d5a55"/>
<path d="M0 44H22V64H0Z" fill="#b3a884"/>
<path d="M50 48L80 41" stroke="#8a7f62" stroke-width="1" stroke-dasharray="2 2"/>
<path d="M24 46L20 56Q8 58 3 66V80H78V70Q76 60 62 56L46 48Z" fill="#10131a"/>
<path d="M40 62Q56 54 70 60Q78 64 78 72V80H38Q36 70 40 62Z" fill="#2a3540"/>
<path d="M36 74Q50 66 64 74L60 80H38Z" fill="#1a222c"/>
<path d="M23 40H45V52Q38 58 30 55Q24 52 23 48Z" fill="#b58d76"/>
<path d="M19 22Q19 10 33 10Q47 10 47 24V34Q46 46 38 50Q30 52 24 46Q19 38 19 22Z" fill="#caa48c"/>
<path d="M27 12Q38 10 42 16Q40 24 34 28Q30 20 27 12Z" fill="#dcc0ae" opacity=".8"/>
<path d="M18 28Q15 12 24 7Q34 2 43 8Q50 14 47 28Q45 20 41 14Q36 11 30 12Q23 14 21 20Q19 24 18 28Z" fill="#14141a"/>
<path d="M23 22.500L29 21.500M35 21.500L41 22.500" stroke="#2a1f1c" stroke-width="1.400"/>
<path d="M24 25.500H29.500M35.500 25.500H41" stroke="#3a2a26" stroke-width="1.600"/>
<path d="M33 24L31.500 32H35" stroke="#a87f6a" stroke-width="1.200" fill="none"/>
<path d="M27.500 36.500Q32 34.500 36.500 36.500" stroke="#8a4a44" stroke-width="2" fill="none"/>
<path d="M18 28Q16 30 18 34L20 36V28Z" fill="#b98f78"/><path d="M47 28Q49 30 47.500 35L46 37V28Z" fill="#c9a58e"/>
</svg>
<svg class="abs" style="left:2536px;top:68px" width="16" height="11" viewBox="0 0 16 11"><path d="M0.600 1H15.400L8 10.400Z" fill="#62646f"/></svg>
</div>
<div id="tags">
<div class="tag" style="left:30px;width:163px;border:2px solid #d8dce5;background:#fff;color:#495060"><span class="abs" style="left:16px;top:3px">数据中心</span><svg class="abs" style="left:122px;top:19px" width="18" height="18" viewBox="0 0 18 18"><path d="M2.500 2.500L15.500 15.500M15.500 2.500L2.500 15.500" stroke="#495060" stroke-width="1.800"/></svg></div>
<div class="tag" style="left:203px;width:188px;border:2px solid #5a9cf8;background:#5a9cf8;color:#fff"><span class="abs" style="left:16px;top:18px;width:16px;height:16px;border-radius:8px;background:#fff"></span><span class="abs" style="left:43px;top:3px">笔记管理</span><svg class="abs" style="left:147px;top:19px" width="18" height="18" viewBox="0 0 18 18"><path d="M2.500 2.500L15.500 15.500M15.500 2.500L2.500 15.500" stroke="#fff" stroke-width="1.800"/></svg></div>
</div>
<!-- form (coordinates relative to #main: x-400, y-318) -->
<div class="lbl" style="left:40px;top:208px">分类</div>
<div class="inp" style="left:120px;top:208px;width:400px"><span class="ph">请选择分类</span><svg class="dd" viewBox="0 0 1024 1024"><path fill="#a8abb2" d="M831.872 340.864 512 652.672 192.128 340.864a30.592 30.592 0 0 0-42.752 0 29.120 29.120 0 0 0 0 41.600L489.664 714.240a32 32 0 0 0 44.672 0l340.288-331.712a29.120 29.120 0 0 0 0-41.728 30.592 30.592 0 0 0-42.752 0z"/></svg></div>
<div class="lbl" style="left:584px;top:208px">标题</div>
<div class="inp" style="left:664px;top:208px;width:400px"><span class="ph">请输入标题</span></div>
<div class="lbl" style="left:1128px;top:208px">作者</div>
<div class="inp" style="left:1208px;top:208px;width:400px"><span class="ph">请输入作者</span></div>
<div class="lbl" style="left:1672px;top:208px">类型</div>
<div class="inp" style="left:1752px;top:208px;width:400px"><span class="ph">笔记类型</span><svg class="dd" viewBox="0 0 1024 1024"><path fill="#a8abb2" d="M831.872 340.864 512 652.672 192.128 340.864a30.592 30.592 0 0 0-42.752 0 29.120 29.120 0 0 0 0 41.600L489.664 714.240a32 32 0 0 0 44.672 0l340.288-331.712a29.120 29.120 0 0 0 0-41.728 30.592 30.592 0 0 0-42.752 0z"/></svg></div>
<div class="lbl" style="left:40px;top:308px">状态</div>
<div class="inp" style="left:120px;top:308px;width:400px"><span class="ph">笔记状态</span><svg class="dd" viewBox="0 0 1024 1024"><path fill="#a8abb2" d="M831.872 340.864 512 652.672 192.128 340.864a30.592 30.592 0 0 0-42.752 0 29.120 29.120 0 0 0 0 41.600L489.664 714.240a32 32 0 0 0 44.672 0l340.288-331.712a29.120 29.120 0 0 0 0-41.728 30.592 30.592 0 0 0-42.752 0z"/></svg></div>
<div class="lbl" style="left:584px;top:308px">创建时间</div>
<div class="inp" style="left:720px;top:308px;width:480px"><svg style="position:absolute;left:20px;top:16px;width:28px;height:28px" viewBox="0 0 1024 1024"><path fill="#a8abb2" d="M128 384v512h768V192H768v32a32 32 0 1 1-64 0v-32H320v32a32 32 0 0 1-64 0v-32H128v128h768v64H128zm192-256h384V96a32 32 0 1 1 64 0v32h160a32 32 0 0 1 32 32v768a32 32 0 0 1-32 32H96a32 32 0 0 1-32-32V160a32 32 0 0 1 32-32h160V96a32 32 0 0 1 64 0v32zm-32 384h64a32 32 0 0 1 0 64h-64a32 32 0 0 1 0-64zm0 192h64a32 32 0 1 1 0 64h-64a32 32 0 1 1 0-64zm192-192h64a32 32 0 0 1 0 64h-64a32 32 0 0 1 0-64zm0 192h64a32 32 0 1 1 0 64h-64a32 32 0 1 1 0-64zm192-192h64a32 32 0 1 1 0 64h-64a32 32 0 1 1 0-64zm0 192h64a32 32 0 1 1 0 64h-64a32 32 0 1 1 0-64z"/></svg><span class="abs" style="left:78px;top:1.500px">开始日期</span><span class="abs" style="left:234px;top:1.500px;color:#303133">-</span><span class="abs" style="left:290px;top:1.500px">结束日期</span></div>
<div class="btn" style="left:1264px;top:308px;width:160px;background:#5a9cf8;border-color:#5a9cf8;color:#fff"><svg style="left:30px" viewBox="0 0 1024 1024"><path fill="#fff" d="m795.904 750.72 124.992 124.928a32 32 0 0 1-45.248 45.248L750.656 795.904a416 416 0 1 1 45.248-45.248zM480 832a352 352 0 1 0 0-704 352 352 0 0 0 0 704z"/></svg><span class="t" style="left:70px">搜索</span></div>
<div class="btn" style="left:1448px;top:308px;width:160px;background:#fff;border-color:#dcdfe6;color:#606266"><svg style="left:30px" viewBox="0 0 1024 1024"><path fill="#606266" d="M771.776 794.88A384 384 0 0 1 128 512h64a320 320 0 0 0 555.712 216.448H654.72a32 32 0 1 1 0-64h149.056a32 32 0 0 1 32 32v148.928a32 32 0 1 1-64 0v-50.56zM276.288 295.616h92.992a32 32 0 0 1 0 64H220.160a32 32 0 0 1-32-32V178.560a32 32 0 0 1 64 0v50.560A384 384 0 0 1 896.128 512h-64a320 320 0 0 0-555.776-216.384z"/></svg><span class="t" style="left:70px">重置</span></div>
<div class="btn" style="left:40px;top:408px;width:160px;background:#ecf5ff;border-color:#a0cfff;color:#5a9cf8"><svg style="left:30px" viewBox="0 0 1024 1024"><path fill="#5a9cf8" d="M480 480V128a32 32 0 0 1 64 0v352h352a32 32 0 1 1 0 64H544v352a32 32 0 1 1-64 0V544H128a32 32 0 0 1 0-64h352z"/></svg><span class="t" style="left:70px">新增</span></div>
<div class="btn" style="left:220px;top:408px;width:160px;background:#f0f9eb;border-color:#e1f3d8;color:#b3e19d"><svg style="left:30px" viewBox="0 0 1024 1024"><path fill="#b3e19d" d="M832 512a32 32 0 1 1 64 0v352a32 32 0 0 1-32 32H160a32 32 0 0 1-32-32V160a32 32 0 0 1 32-32h352a32 32 0 0 1 0 64H192v640h640V512z M469.952 554.240l52.800-7.552L847.104 222.400a32 32 0 1 0-45.248-45.248L477.440 501.440l-7.552 52.800zm422.400-422.400a96 96 0 0 1 0 135.808l-331.840 331.840a32 32 0 0 1-18.112 9.088L436.800 623.680a32 32 0 0 1-36.224-36.224l15.104-105.600a32 32 0 0 1 9.024-18.112l331.904-331.840a96 96 0 0 1 135.744 0z"/></svg><span class="t" style="left:70px">修改</span></div>
<div class="btn" style="left:400px;top:408px;width:160px;background:#fef0f0;border-color:#fde2e2;color:#fab6b6"><svg style="left:30px" viewBox="0 0 1024 1024"><path fill="#fab6b6" d="M160 256H96a32 32 0 0 1 0-64h256V95.936a32 32 0 0 1 32-32h256a32 32 0 0 1 32 32V192h256a32 32 0 1 1 0 64h-64v672a32 32 0 0 1-32 32H192a32 32 0 0 1-32-32V256zm448-64v-64H416v64h192zM224 896h576V256H224v640zm192-128a32 32 0 0 1-32-32V416a32 32 0 0 1 64 0v320a32 32 0 0 1-32 32zm192 0a32 32 0 0 1-32-32V416a32 32 0 0 1 64 0v320a32 32 0 0 1-32 32z"/></svg><span class="t" style="left:70px">删除</span></div>
<div class="btn" style="left:580px;top:408px;width:160px;background:#fdf6ec;border-color:#f3d19e;color:#dba54d"><svg style="left:30px" viewBox="0 0 1024 1024"><path fill="#dba54d" d="M160 832h704a32 32 0 1 1 0 64H160a32 32 0 1 1 0-64zm384-253.696 236.288-236.352 45.248 45.248L508.800 704 192 387.200l45.248-45.248L480 584.704V128h64v450.304z"/></svg><span class="t" style="left:70px">导出</span></div>
<div class="btn" style="left:760px;top:408px;width:197px;background:#dba54d;border-color:#dba54d;color:#fff"><svg style="left:30px" viewBox="0 0 1024 1024"><path fill="#fff" d="M160 256H96a32 32 0 0 1 0-64h256V95.936a32 32 0 0 1 32-32h256a32 32 0 0 1 32 32V192h256a32 32 0 1 1 0 64h-64v672a32 32 0 0 1-32 32H192a32 32 0 0 1-32-32V256zm448-64v-64H416v64h192zM224 896h576V256H224v640zm192-128a32 32 0 0 1-32-32V416a32 32 0 0 1 64 0v320a32 32 0 0 1-32 32zm192 0a32 32 0 0 1-32-32V416a32 32 0 0 1 64 0v320a32 32 0 0 1-32 32z"/></svg><span class="t" style="left:70px">ES搜索</span></div>
<div class="btn" style="left:981px;top:408px;width:198px;background:#e27370;border-color:#e27370;color:#fff"><svg style="left:30px" viewBox="0 0 1024 1024"><path fill="#fff" d="M771.776 794.88A384 384 0 0 1 128 512h64a320 320 0 0 0 555.712 216.448H654.72a32 32 0 1 1 0-64h149.056a32 32 0 0 1 32 32v148.928a32 32 0 1 1-64 0v-50.56zM276.288 295.616h92.992a32 32 0 0 1 0 64H220.160a32 32 0 0 1-32-32V178.560a32 32 0 0 1 64 0v50.560A384 384 0 0 1 896.128 512h-64a320 320 0 0 0-555.776-216.384z"/></svg><span class="t" style="left:70px">ES重置</span></div>
<div class="abs" style="left:2420px;top:408px;width:64px;height:64px;border-radius:32px;border:2px solid #dcdfe6;background:#fff"><svg style="position:absolute;left:16px;top:16px;width:28px;height:28px" viewBox="0 0 1024 1024"><path fill="#606266" d="m795.904 750.72 124.992 124.928a32 32 0 0 1-45.248 45.248L750.656 795.904a416 416 0 1 1 45.248-45.248zM480 832a352 352 0 1 0 0-704 352 352 0 0 0 0 704z"/></svg></div>
<div class="abs" style="left:2508px;top:408px;width:64px;height:64px;border-radius:32px;border:2px solid #dcdfe6;background:#fff"><svg style="position:absolute;left:16px;top:16px;width:28px;height:28px" viewBox="0 0 1024 1024"><path fill="#606266" d="M771.776 794.88A384 384 0 0 1 128 512h64a320 320 0 0 0 555.712 216.448H654.72a32 32 0 1 1 0-64h149.056a32 32 0 0 1 32 32v148.928a32 32 0 1 1-64 0v-50.56zM276.288 295.616h92.992a32 32 0 0 1 0 64H220.160a32 32 0 0 1-32-32V178.560a32 32 0 0 1 64 0v50.560A384 384 0 0 1 896.128 512h-64a320 320 0 0 0-555.776-216.384z"/></svg></div>
<!-- table -->
<div id="thead"><div class="cb" style="top:25px"></div>
<div class="th" style="left:110px">序号</div>
<div class="th" style="left:270px">分类</div>
<div class="th" style="left:430px">标题</div>
<div class="th" style="left:590px">作者</div>
<div class="th" style="left:750px">笔记封面</div>
<div class="th" style="left:910px">内容</div>
<div class="th" style="left:1070px">发布位置</div>
<div class="th" style="left:1230px">图片数量</div>
<div class="th" style="left:1390px">是否置顶</div>
<div class="th" style="left:1550px">状态</div>
<div class="th" style="left:1710px">类型</div>
<div class="th" style="left:1870px">浏览次数</div>
<div class="th" style="left:2030px">点赞次数</div>
</div>
<div class="row" style="top:568px"><div class="cb" style="top:68px"></div>
<div class="td" style="left:110px">517</div>
<div class="td" style="left:270px">头像</div>
<div class="td" style="left:427.5px">121</div>
<div class="td" style="left:590px">壁纸</div>
<div class="img"><svg width="120" height="120" viewBox="0 0 120 120"><use href="#img1"/></svg></div><div class="dot" style="left:897px"></div><div class="dot" style="left:906.500px"></div>
<div class="td" style="left:907.5px">121</div>
<div class="td" style="left:1094px;text-align:left;letter-spacing:0.5px">北京…</div>
<div class="td" style="left:1230px">3</div>
<div class="tg d" style="left:1438px;width:64px">否</div>
<div class="tg w" style="left:1574px;width:112px">未审核</div>
<div class="tg p" style="left:1746px;width:88px">图文</div>
<div class="td" style="left:1870px">0</div>
<div class="td" style="left:2030px">0</div>
</div>
<div class="row" style="top:735px"><div class="cb" style="top:68px"></div>
<div class="td" style="left:110px">516</div>
<div class="td" style="left:270px">头像</div>
<div class="td" style="left:427.5px">111</div>
<div class="td" style="left:590px">头像</div>
<div class="img"><svg width="120" height="120" viewBox="0 0 120 120"><use href="#img2"/></svg></div><div class="dot" style="left:897px"></div><div class="dot" style="left:906.500px"></div>
<div class="td" style="left:907.5px">111</div>
<div class="td" style="left:1067.5px">北京市</div>
<div class="td" style="left:1230px">1</div>
<div class="tg d" style="left:1438px;width:64px">否</div>
<div class="tg s" style="left:1574px;width:112px">已通过</div>
<div class="tg w" style="left:1746px;width:88px">视频</div>
<div class="td" style="left:1870px">0</div>
<div class="td" style="left:2030px">3</div>
</div>
<div class="row" style="top:902px"><div class="cb" style="top:68px"></div>
<div class="td" style="left:110px">515</div>
<div class="td" style="left:270px">头像</div>
<div class="td" style="left:427.5px">111</div>
<div class="td" style="left:590px">头像</div>
<div class="img"><svg width="120" height="120" viewBox="0 0 120 120"><use href="#img3"/></svg></div><div class="dot" style="left:897px"></div><div class="dot" style="left:906.500px"></div>
<div class="td" style="left:907.5px">111</div>
<div class="td" style="left:1067.5px">北京市</div>
<div class="td" style="left:1230px">1</div>
<div class="tg d" style="left:1438px;width:64px">否</div>
<div class="tg w" style="left:1574px;width:112px">未审核</div>
<div class="tg p" style="left:1746px;width:88px">图文</div>
<div class="td" style="left:1870px">0</div>
<div class="td" style="left:2030px">0</div>
</div>
<div class="row" style="top:1069px"><div class="cb" style="top:68px"></div>
<div class="td" style="left:110px">185</div>
<div class="td" style="left:270px">头像</div>
<div class="td" style="left:454px;text-align:left;letter-spacing:0.5px">用户…</div>
<div class="td" style="left:590px">头像</div>
<div class="img"><svg width="120" height="120" viewBox="0 0 120 120"><use href="#img4"/></svg></div><div class="dot" style="left:897px"></div><div class="dot" style="left:906.500px"></div>
<div class="td" style="left:907.5px">11</div>
<div class="td" style="left:1067.5px">北京市</div>
<div class="td" style="left:1230px">1</div>
<div class="tg d" style="left:1438px;width:64px">否</div>
<div class="tg d" style="left:1574px;width:112px">已驳回</div>
<div class="tg p" style="left:1746px;width:88px">图文</div>
<div class="td" style="left:1870px">5</div>
<div class="td" style="left:2030px">0</div>
</div>
<div class="row" style="top:1236px"><div class="cb" style="top:68px"></div>
<div class="td" style="left:110px">514</div>
<div class="td" style="left:270px">头像</div>
<div class="td" style="left:427.5px">嘿嘿嘿</div>
<div class="td" style="left:590px">头像</div>
<div class="img"><svg width="120" height="120" viewBox="0 0 120 120"><use href="#img5"/></svg></div><div class="dot" style="left:897px"></div><div class="dot" style="left:906.500px"></div>
<div class="td" style="left:907.5px">嘿嘿嘿</div>
<div class="td" style="left:1067.5px">北京市</div>
<div class="td" style="left:1230px">1</div>
<div class="tg d" style="left:1438px;width:64px">否</div>
<div class="tg d" style="left:1574px;width:112px">已驳回</div>
<div class="tg p" style="left:1746px;width:88px">图文</div>
<div class="td" style="left:1870px">0</div>
<div class="td" style="left:2030px">0</div>
</div>
<div class="row" style="top:1403px"><div class="cb" style="top:68px"></div>
<div class="td" style="left:110px">47</div>
<div class="td" style="left:270px">壁纸</div>
<div class="td" style="left:427.5px">壁纸</div>
<div class="td" style="left:590px">壁纸</div>
<div class="img"><svg width="120" height="120" viewBox="0 0 120 120"><use href="#img6"/></svg></div><div class="dot" style="left:897px"></div><div class="dot" style="left:906.500px"></div>
<div class="td" style="left:907.5px"></div>
<div class="td" style="left:1067.5px">北京市</div>
<div class="td" style="left:1230px">1</div>
<div class="tg d" style="left:1438px;width:64px">否</div>
<div class="tg s" style="left:1574px;width:112px">已通过</div>
<div class="tg p" style="left:1746px;width:88px">图文</div>
<div class="td" style="left:1870px">2</div>
<div class="td" style="left:2030px">1</div>
</div>
<div class="row" style="top:1570px"><div class="cb" style="top:68px"></div>
<div class="td" style="left:110px">513</div>
<div class="td" style="left:270px">头像</div>
<div class="td" style="left:427.5px">11</div>
<div class="td" style="left:590px">头像</div>
<div class="img"><svg width="120" height="120" viewBox="0 0 120 120"><use href="#img7"/></svg></div><div class="dot" style="left:897px"></div><div class="dot" style="left:906.500px"></div>
<div class="td" style="left:907.5px">11</div>
<div class="td" style="left:1067.5px">北京市</div>
<div class="td" style="left:1230px">1</div>
<div class="tg d" style="left:1438px;width:64px">否</div>
<div class="tg d" style="left:1574px;width:112px">已驳回</div>
<div class="tg p" style="left:1746px;width:88px">图文</div>
<div class="td" style="left:1870px">3</div>
<div class="td" style="left:2030px">1</div>
</div>
<div id="fixsh"></div>
<div id="fixed"><div id="fixedh">操作</div>
<div class="frow" style="top:80px"><div class="ob" style="left:116px;background:#5a9cf8"><svg viewBox="0 0 1024 1024"><path fill="#fff" d="M832 512a32 32 0 1 1 64 0v352a32 32 0 0 1-32 32H160a32 32 0 0 1-32-32V160a32 32 0 0 1 32-32h352a32 32 0 0 1 0 64H192v640h640V512z M469.952 554.240l52.800-7.552L847.104 222.400a32 32 0 1 0-45.248-45.248L477.440 501.440l-7.552 52.800zm422.400-422.400a96 96 0 0 1 0 135.808l-331.840 331.840a32 32 0 0 1-18.112 9.088L436.800 623.680a32 32 0 0 1-36.224-36.224l15.104-105.600a32 32 0 0 1 9.024-18.112l331.904-331.840a96 96 0 0 1 135.744 0z"/></svg></div><div class="ob" style="left:212px;background:#e27370"><svg viewBox="0 0 1024 1024"><path fill="#fff" d="M160 256H96a32 32 0 0 1 0-64h256V95.936a32 32 0 0 1 32-32h256a32 32 0 0 1 32 32V192h256a32 32 0 1 1 0 64h-64v672a32 32 0 0 1-32 32H192a32 32 0 0 1-32-32V256zm448-64v-64H416v64h192zM224 896h576V256H224v640zm192-128a32 32 0 0 1-32-32V416a32 32 0 0 1 64 0v320a32 32 0 0 1-32 32zm192 0a32 32 0 0 1-32-32V416a32 32 0 0 1 64 0v320a32 32 0 0 1-32 32z"/></svg></div></div>
<div class="frow" style="top:247px"><div class="ob" style="left:116px;background:#5a9cf8"><svg viewBox="0 0 1024 1024"><path fill="#fff" d="M832 512a32 32 0 1 1 64 0v352a32 32 0 0 1-32 32H160a32 32 0 0 1-32-32V160a32 32 0 0 1 32-32h352a32 32 0 0 1 0 64H192v640h640V512z M469.952 554.240l52.800-7.552L847.104 222.400a32 32 0 1 0-45.248-45.248L477.440 501.440l-7.552 52.800zm422.400-422.400a96 96 0 0 1 0 135.808l-331.840 331.840a32 32 0 0 1-18.112 9.088L436.800 623.680a32 32 0 0 1-36.224-36.224l15.104-105.600a32 32 0 0 1 9.024-18.112l331.904-331.840a96 96 0 0 1 135.744 0z"/></svg></div><div class="ob" style="left:212px;background:#e27370"><svg viewBox="0 0 1024 1024"><path fill="#fff" d="M160 256H96a32 32 0 0 1 0-64h256V95.936a32 32 0 0 1 32-32h256a32 32 0 0 1 32 32V192h256a32 32 0 1 1 0 64h-64v672a32 32 0 0 1-32 32H192a32 32 0 0 1-32-32V256zm448-64v-64H416v64h192zM224 896h576V256H224v640zm192-128a32 32 0 0 1-32-32V416a32 32 0 0 1 64 0v320a32 32 0 0 1-32 32zm192 0a32 32 0 0 1-32-32V416a32 32 0 0 1 64 0v320a32 32 0 0 1-32 32z"/></svg></div></div>
<div class="frow" style="top:414px"><div class="ob" style="left:116px;background:#5a9cf8"><svg viewBox="0 0 1024 1024"><path fill="#fff" d="M832 512a32 32 0 1 1 64 0v352a32 32 0 0 1-32 32H160a32 32 0 0 1-32-32V160a32 32 0 0 1 32-32h352a32 32 0 0 1 0 64H192v640h640V512z M469.952 554.240l52.800-7.552L847.104 222.400a32 32 0 1 0-45.248-45.248L477.440 501.440l-7.552 52.800zm422.400-422.400a96 96 0 0 1 0 135.808l-331.840 331.840a32 32 0 0 1-18.112 9.088L436.800 623.680a32 32 0 0 1-36.224-36.224l15.104-105.600a32 32 0 0 1 9.024-18.112l331.904-331.840a96 96 0 0 1 135.744 0z"/></svg></div><div class="ob" style="left:212px;background:#e27370"><svg viewBox="0 0 1024 1024"><path fill="#fff" d="M160 256H96a32 32 0 0 1 0-64h256V95.936a32 32 0 0 1 32-32h256a32 32 0 0 1 32 32V192h256a32 32 0 1 1 0 64h-64v672a32 32 0 0 1-32 32H192a32 32 0 0 1-32-32V256zm448-64v-64H416v64h192zM224 896h576V256H224v640zm192-128a32 32 0 0 1-32-32V416a32 32 0 0 1 64 0v320a32 32 0 0 1-32 32zm192 0a32 32 0 0 1-32-32V416a32 32 0 0 1 64 0v320a32 32 0 0 1-32 32z"/></svg></div></div>
<div class="frow" style="top:581px"><div class="ob" style="left:116px;background:#5a9cf8"><svg viewBox="0 0 1024 1024"><path fill="#fff" d="M832 512a32 32 0 1 1 64 0v352a32 32 0 0 1-32 32H160a32 32 0 0 1-32-32V160a32 32 0 0 1 32-32h352a32 32 0 0 1 0 64H192v640h640V512z M469.952 554.240l52.800-7.552L847.104 222.400a32 32 0 1 0-45.248-45.248L477.440 501.440l-7.552 52.800zm422.400-422.400a96 96 0 0 1 0 135.808l-331.840 331.840a32 32 0 0 1-18.112 9.088L436.800 623.680a32 32 0 0 1-36.224-36.224l15.104-105.600a32 32 0 0 1 9.024-18.112l331.904-331.840a96 96 0 0 1 135.744 0z"/></svg></div><div class="ob" style="left:212px;background:#e27370"><svg viewBox="0 0 1024 1024"><path fill="#fff" d="M160 256H96a32 32 0 0 1 0-64h256V95.936a32 32 0 0 1 32-32h256a32 32 0 0 1 32 32V192h256a32 32 0 1 1 0 64h-64v672a32 32 0 0 1-32 32H192a32 32 0 0 1-32-32V256zm448-64v-64H416v64h192zM224 896h576V256H224v640zm192-128a32 32 0 0 1-32-32V416a32 32 0 0 1 64 0v320a32 32 0 0 1-32 32zm192 0a32 32 0 0 1-32-32V416a32 32 0 0 1 64 0v320a32 32 0 0 1-32 32z"/></svg></div></div>
<div class="frow" style="top:748px"><div class="ob" style="left:116px;background:#5a9cf8"><svg viewBox="0 0 1024 1024"><path fill="#fff" d="M832 512a32 32 0 1 1 64 0v352a32 32 0 0 1-32 32H160a32 32 0 0 1-32-32V160a32 32 0 0 1 32-32h352a32 32 0 0 1 0 64H192v640h640V512z M469.952 554.240l52.800-7.552L847.104 222.400a32 32 0 1 0-45.248-45.248L477.440 501.440l-7.552 52.800zm422.400-422.400a96 96 0 0 1 0 135.808l-331.840 331.840a32 32 0 0 1-18.112 9.088L436.800 623.680a32 32 0 0 1-36.224-36.224l15.104-105.600a32 32 0 0 1 9.024-18.112l331.904-331.840a96 96 0 0 1 135.744 0z"/></svg></div><div class="ob" style="left:212px;background:#e27370"><svg viewBox="0 0 1024 1024"><path fill="#fff" d="M160 256H96a32 32 0 0 1 0-64h256V95.936a32 32 0 0 1 32-32h256a32 32 0 0 1 32 32V192h256a32 32 0 1 1 0 64h-64v672a32 32 0 0 1-32 32H192a32 32 0 0 1-32-32V256zm448-64v-64H416v64h192zM224 896h576V256H224v640zm192-128a32 32 0 0 1-32-32V416a32 32 0 0 1 64 0v320a32 32 0 0 1-32 32zm192 0a32 32 0 0 1-32-32V416a32 32 0 0 1 64 0v320a32 32 0 0 1-32 32z"/></svg></div></div>
<div class="frow" style="top:915px"><div class="ob" style="left:116px;background:#5a9cf8"><svg viewBox="0 0 1024 1024"><path fill="#fff" d="M832 512a32 32 0 1 1 64 0v352a32 32 0 0 1-32 32H160a32 32 0 0 1-32-32V160a32 32 0 0 1 32-32h352a32 32 0 0 1 0 64H192v640h640V512z M469.952 554.240l52.800-7.552L847.104 222.400a32 32 0 1 0-45.248-45.248L477.440 501.440l-7.552 52.800zm422.400-422.400a96 96 0 0 1 0 135.808l-331.840 331.840a32 32 0 0 1-18.112 9.088L436.800 623.680a32 32 0 0 1-36.224-36.224l15.104-105.600a32 32 0 0 1 9.024-18.112l331.904-331.840a96 96 0 0 1 135.744 0z"/></svg></div><div class="ob" style="left:212px;background:#e27370"><svg viewBox="0 0 1024 1024"><path fill="#fff" d="M160 256H96a32 32 0 0 1 0-64h256V95.936a32 32 0 0 1 32-32h256a32 32 0 0 1 32 32V192h256a32 32 0 1 1 0 64h-64v672a32 32 0 0 1-32 32H192a32 32 0 0 1-32-32V256zm448-64v-64H416v64h192zM224 896h576V256H224v640zm192-128a32 32 0 0 1-32-32V416a32 32 0 0 1 64 0v320a32 32 0 0 1-32 32zm192 0a32 32 0 0 1-32-32V416a32 32 0 0 1 64 0v320a32 32 0 0 1-32 32z"/></svg></div></div>
<div class="frow" style="top:1082px"><div class="ob" style="left:116px;background:#5a9cf8"><svg viewBox="0 0 1024 1024"><path fill="#fff" d="M832 512a32 32 0 1 1 64 0v352a32 32 0 0 1-32 32H160a32 32 0 0 1-32-32V160a32 32 0 0 1 32-32h352a32 32 0 0 1 0 64H192v640h640V512z M469.952 554.240l52.800-7.552L847.104 222.400a32 32 0 1 0-45.248-45.248L477.440 501.440l-7.552 52.800zm422.400-422.400a96 96 0 0 1 0 135.808l-331.840 331.840a32 32 0 0 1-18.112 9.088L436.800 623.680a32 32 0 0 1-36.224-36.224l15.104-105.600a32 32 0 0 1 9.024-18.112l331.904-331.840a96 96 0 0 1 135.744 0z"/></svg></div><div class="ob" style="left:212px;background:#e27370"><svg viewBox="0 0 1024 1024"><path fill="#fff" d="M160 256H96a32 32 0 0 1 0-64h256V95.936a32 32 0 0 1 32-32h256a32 32 0 0 1 32 32V192h256a32 32 0 1 1 0 64h-64v672a32 32 0 0 1-32 32H192a32 32 0 0 1-32-32V256zm448-64v-64H416v64h192zM224 896h576V256H224v640zm192-128a32 32 0 0 1-32-32V416a32 32 0 0 1 64 0v320a32 32 0 0 1-32 32zm192 0a32 32 0 0 1-32-32V416a32 32 0 0 1 64 0v320a32 32 0 0 1-32 32z"/></svg></div></div>
</div>
</div><!-- /main -->
<div id="vscroll"><div id="vthumb"></div></div>
<div class="abs" style="left:400px;top:318px;width:18px;height:1646px;background:linear-gradient(90deg,rgba(0,21,41,.26),rgba(0,21,41,.09) 40%,rgba(0,21,41,0))"></div>
<div id="status">localhost:81/note/note</div>
</div></body></html>
